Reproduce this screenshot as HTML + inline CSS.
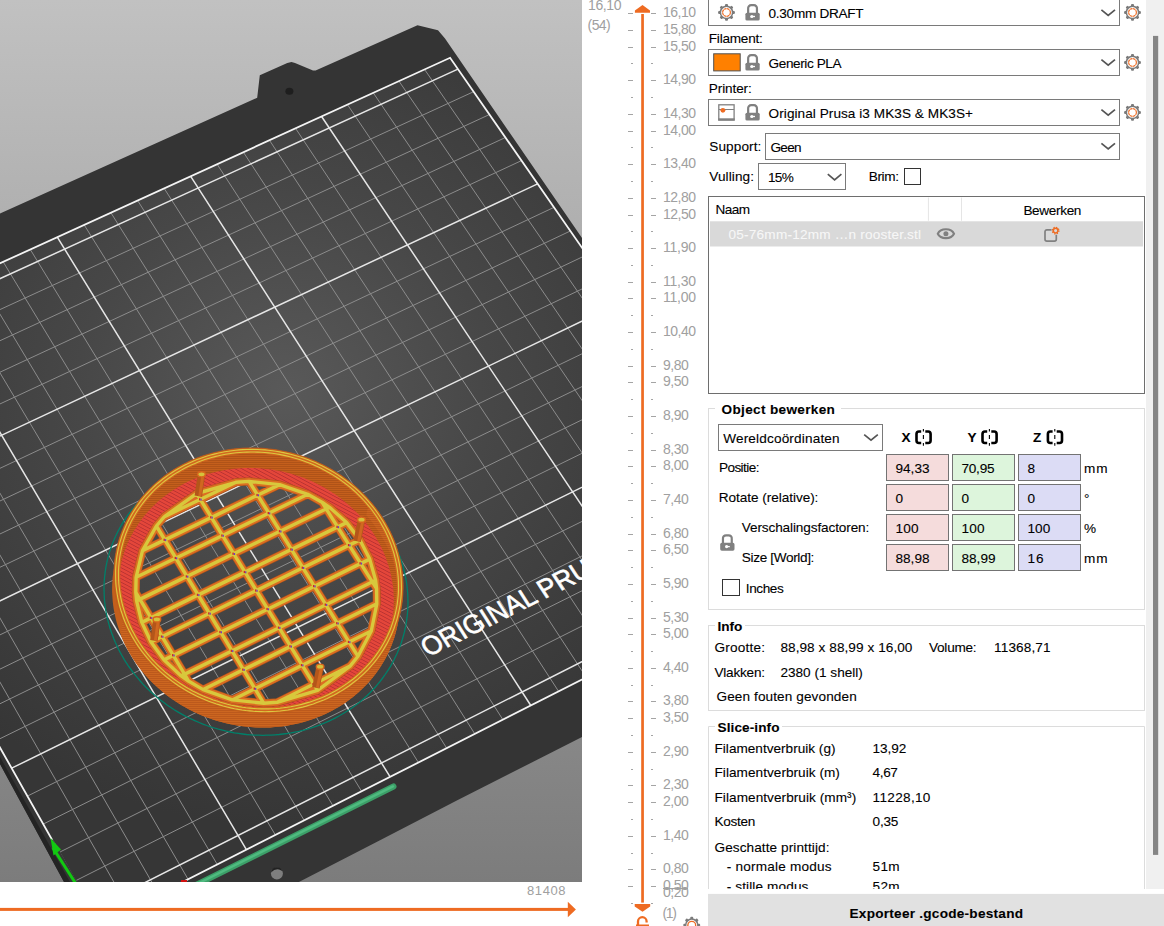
<!DOCTYPE html>
<html><head><meta charset="utf-8"><style>
html,body{margin:0;padding:0;background:#ffffff;width:1164px;height:926px;overflow:hidden}
svg text{font-family:"Liberation Sans",sans-serif}
</style></head><body>
<svg width="1164" height="926" viewBox="0 0 1164 926" style="position:absolute;left:0;top:0">
<svg x="0" y="0" width="582" height="882" viewBox="0 0 582 882">
<defs><linearGradient id="bg" x1="0" y1="0" x2="0" y2="1"><stop offset="0" stop-color="#c1c1c1"/><stop offset="1" stop-color="#7c7c7c"/></linearGradient>
<radialGradient id="surf" gradientUnits="userSpaceOnUse" cx="285" cy="390" r="460" gradientTransform="translate(285 390) scale(1 0.95) translate(-285 -390)"><stop offset="0" stop-color="#595959"/><stop offset="0.45" stop-color="#474747"/><stop offset="1" stop-color="#363636"/></radialGradient>
</defs>
<rect width="582" height="882" fill="url(#bg)"/>
<polygon points="0,213.5 257.2,97.7 259.8,75.3 287.3,62.9 291.5,62 295,62.9 313,70.6 315.6,70.6 417.5,25.3 438,30.2 445,38.5 582,238 582,737 457.3,800.3 380,840.2 298.9,882 64,882 0,764" fill="#343434"/>
<polygon points="0,764 64,882 70,882 0,757" fill="#242424"/>
<ellipse cx="289.4" cy="91.2" rx="4" ry="3.5" fill="#1e1e1e"/>
<ellipse cx="276.9" cy="873.4" rx="6" ry="6" fill="#7e7e7e"/><path d="M271 872.5 A6 6 0 0 1 282.5 871 L279 869.5 Q275 868.5 271 872.5Z" fill="#222"/>
<polygon points="99.7,924.1 803.8,567.1 450.1,57.8 -217.4,362.6" fill="url(#surf)"/>
<path d="M129.3 909.1L-189.4 349.9 M158.7 894.1L-161.6 337.1 M188.1 879.3L-133.9 324.5 M217.3 864.5L-106.2 311.9 M275.4 835L-51.3 286.8 M304.2 820.4L-24 274.3 M333 805.8L3.2 261.9 M361.6 791.3L30.3 249.5 M418.4 762.5L84.2 224.9 M446.7 748.2L110.9 212.7 M474.8 733.9L137.6 200.5 M502.9 719.7L164.2 188.4 M558.6 691.4L217.1 164.2 M586.3 677.4L243.4 152.2 M613.8 663.4L269.5 140.3 M641.3 649.5L295.6 128.4 M695.9 621.8L347.5 104.7 M723 608.1L373.3 92.9 M750 594.4L399 81.2 M777 580.7L424.6 69.5 M75.3 880.9L776.7 528.1 M59.2 852.4L758.8 502.3 M43.2 824.1L741 476.8 M27.4 796.1L723.4 451.4 M-3.9 740.6L688.5 401.1 M-19.4 713.2L671.2 376.3 M-34.8 686L654.1 351.6 M-50 659L637.1 327.2 M-80.2 605.6L603.5 278.7 M-95.1 579.2L586.8 254.8 M-109.9 553L570.3 231 M-124.6 527L553.9 207.4 M-153.6 475.6L521.5 160.6 M-168 450.2L505.4 137.5 M-182.2 424.9L489.5 114.5 M-196.4 399.9L473.6 91.7" stroke="#8c8c8c" stroke-width="1" fill="none" opacity="1"/>
<path d="M246.4 849.7L-78.7 299.3 M390.1 776.9L57.3 237.2 M530.8 705.5L190.7 176.3 M668.7 635.6L321.6 116.5 M91.5 909.6L794.7 554.1 M11.7 768.2L705.9 426.2 M-65.2 632.2L620.2 302.8 M-139.1 501.2L537.6 183.9 M-210.4 375L457.9 69.1" stroke="#e6e6e6" stroke-width="1.5" fill="none" opacity="1"/>
<polygon points="99.7,924.1 803.8,567.1 450.1,57.8 -217.4,362.6" fill="none" stroke="#f4f4f4" stroke-width="1.8"/>
<text transform="matrix(2.7875,-1.3928,1.6981,2.6852,427.89,657.30)" font-family="Liberation Sans" font-size="8.6" fill="#ffffff" stroke="#ffffff" stroke-width="0.2" x="0" y="0" textLength="40" lengthAdjust="spacingAndGlyphs">ORIGINAL</text>
<text transform="matrix(2.7402,-1.3692,1.7276,2.6404,544.54,599.01)" font-family="Liberation Sans" font-size="8.6" fill="#ffffff" stroke="#ffffff" stroke-width="0.2" x="0" y="0" textLength="29.5" lengthAdjust="spacingAndGlyphs">PRUSA</text>
<line x1="196" y1="885" x2="393.5" y2="786.5" stroke="#3c9f68" stroke-width="6" stroke-linecap="round"/><line x1="196" y1="884.6" x2="393" y2="786.4" stroke="#4fbb80" stroke-width="2.4" stroke-linecap="round"/>
<line x1="51.9" y1="840" x2="77.3" y2="884.5" stroke="#383838" stroke-width="2.8"/>
<line x1="53" y1="848" x2="76" y2="884" stroke="#12c812" stroke-width="3"/>
<polygon points="50.5,838 61,849.5 53.5,855.5" fill="#12c812"/>
<rect x="181" y="880" width="6" height="2" fill="#d01010"/>
<g>
<defs><pattern id="redp" patternUnits="userSpaceOnUse" width="3.2" height="3.2" patternTransform="rotate(-62)"><rect width="3.2" height="3.2" fill="#e4463a"/><rect width="0.8" height="3.2" fill="#b83232"/></pattern><pattern id="wallp" patternUnits="userSpaceOnUse" width="2" height="2"><rect width="2" height="2" fill="#cc6620"/><rect width="2" height="0.8" fill="#b8561a"/></pattern><pattern id="innerp" patternUnits="userSpaceOnUse" width="2" height="2"><rect width="2" height="2" fill="#c45f1c"/><rect width="2" height="0.7" fill="#a84e16"/></pattern></defs>
<path d="M386.2 529.1 L384.1 525.9 L381.9 522.8 L379.7 519.7 L377.3 516.7 L374.9 513.7 L372.4 510.8 L369.8 507.9 L367.2 505.1 L364.5 502.4 L361.7 499.7 L358.8 497.1 L355.9 494.6 L352.9 492.1 L349.8 489.7 L346.7 487.4 L343.5 485.2 L340.2 483.0 L336.9 480.9 L333.6 478.9 L330.2 476.9 L326.7 475.0 L323.2 473.3 L319.7 471.6 L316.1 469.9 L312.5 468.4 L308.8 466.9 L305.1 465.6 L301.4 464.3 L297.7 463.1 L293.9 462.0 L290.1 461.0 L286.2 460.1 L282.4 459.2 L278.5 458.5 L274.6 457.8 L270.8 457.3 L266.8 456.8 L262.9 456.4 L259.0 456.1 L255.1 456.0 L251.2 455.9 L247.3 455.9 L243.4 455.9 L239.5 456.1 L235.6 456.4 L231.7 456.8 L227.9 457.2 L224.0 457.8 L220.2 458.4 L216.4 459.1 L212.6 460.0 L208.9 460.9 L205.2 461.9 L201.5 463.0 L197.9 464.1 L194.3 465.4 L190.7 466.8 L187.2 468.2 L183.7 469.7 L180.3 471.3 L176.9 473.0 L173.6 474.8 L170.3 476.7 L167.1 478.6 L163.9 480.6 L160.8 482.7 L157.8 484.9 L154.8 487.1 L151.9 489.4 L149.1 491.8 L146.3 494.3 L143.6 496.8 L141.0 499.4 L138.5 502.1 L136.0 504.8 L133.7 507.6 L131.4 510.4 L129.1 513.3 L127.0 516.3 L125.0 519.3 L123.0 522.4 L121.1 525.5 L119.4 528.7 L117.7 531.9 L116.1 535.2 L114.6 538.5 L113.2 541.8 L111.9 545.2 L110.7 548.6 L109.6 552.1 L108.5 555.6 L107.6 559.1 L106.8 562.6 L106.1 566.2 L105.5 569.8 L105.0 573.4 L104.6 577.0 L104.3 580.6 L104.1 584.3 L104.0 588.0 L104.1 591.6 L104.2 595.3 L104.4 599.0 L104.8 602.7 L105.2 606.3 L105.7 610.0 L106.4 613.6 L107.1 617.3 L108.0 620.9 L109.0 624.6 L110.0 628.2 L111.2 631.7 L112.5 635.3 L113.8 638.8 L115.3 642.3 L116.9 645.8 L118.5 649.2 L120.3 652.6 L122.2 656.0 L124.1 659.3 L126.2 662.6 L128.3 665.8 L130.6 669.0 L132.9 672.1 L135.3 675.2 L137.8 678.2 L140.4 681.2 L143.0 684.1 L145.8 687.0 L148.6 689.7 L151.5 692.5 L154.5 695.1 L157.6 697.7 L160.7 700.2 L163.9 702.6 L167.1 705.0 L170.5 707.3 L173.8 709.5 L177.3 711.6 L180.8 713.6 L184.4 715.6 L188.0 717.5 L191.6 719.2 L195.3 720.9 L199.1 722.5 L202.9 724.1 L206.7 725.5 L210.6 726.8 L214.5 728.0 L218.4 729.2 L222.4 730.2 L226.4 731.2 L230.4 732.0 L234.4 732.8 L238.4 733.4 L242.5 734.0 L246.5 734.5 L250.6 734.8 L254.7 735.1 L258.8 735.2 L262.8 735.3 L266.9 735.2 L271.0 735.1 L275.0 734.8 L279.1 734.5 L283.1 734.0 L287.1 733.5 L291.1 732.9 L295.0 732.1 L298.9 731.3 L302.8 730.3 L306.7 729.3 L310.5 728.2 L314.3 726.9 L318.0 725.6 L321.7 724.2 L325.4 722.7 L328.9 721.1 L332.5 719.4 L336.0 717.6 L339.4 715.8 L342.8 713.8 L346.1 711.8 L349.3 709.7 L352.5 707.5 L355.6 705.2 L358.6 702.9 L361.6 700.4 L364.4 697.9 L367.2 695.4 L370.0 692.7 L372.6 690.0 L375.2 687.2 L377.6 684.4 L380.0 681.5 L382.3 678.5 L384.5 675.5 L386.6 672.4 L388.6 669.3 L390.6 666.1 L392.4 662.9 L394.1 659.6 L395.7 656.3 L397.3 653.0 L398.7 649.6 L400.0 646.2 L401.3 642.7 L402.4 639.2 L403.4 635.7 L404.4 632.1 L405.2 628.5 L405.9 624.9 L406.5 621.3 L407.0 617.7 L407.4 614.1 L407.7 610.4 L407.9 606.7 L408.0 603.1 L407.9 599.4 L407.8 595.7 L407.6 592.0 L407.2 588.4 L406.8 584.7 L406.3 581.1 L405.6 577.4 L404.9 573.8 L404.0 570.2 L403.1 566.6 L402.0 563.0 L400.8 559.5 L399.6 556.0 L398.2 552.5 L396.8 549.0 L395.3 545.6 L393.6 542.2 L391.9 538.9 L390.1 535.6 L388.2 532.3 L386.2 529.1Z" fill="none" stroke="#00806a" stroke-width="1.3"/>
<path d="M379.3 532.4 L377.3 529.4 L375.3 526.5 L373.1 523.5 L370.9 520.7 L368.6 517.9 L366.3 515.1 L363.8 512.4 L361.3 509.7 L358.8 507.2 L356.1 504.6 L353.4 502.2 L350.6 499.8 L347.8 497.4 L344.9 495.1 L341.9 492.9 L338.9 490.8 L335.8 488.7 L332.7 486.7 L329.5 484.8 L326.3 483.0 L323.0 481.2 L319.7 479.5 L316.4 477.9 L313.0 476.4 L309.5 474.9 L306.1 473.5 L302.6 472.2 L299.0 471.0 L295.5 469.9 L291.9 468.8 L288.3 467.9 L284.7 467.0 L281.0 466.2 L277.3 465.5 L273.7 464.9 L270.0 464.4 L266.3 463.9 L262.6 463.6 L258.9 463.3 L255.2 463.1 L251.4 463.0 L247.7 463.0 L244.0 463.1 L240.3 463.3 L236.7 463.5 L233.0 463.9 L229.3 464.3 L225.7 464.8 L222.1 465.4 L218.5 466.1 L214.9 466.9 L211.4 467.8 L207.8 468.7 L204.4 469.7 L200.9 470.9 L197.5 472.1 L194.1 473.3 L190.8 474.7 L187.5 476.2 L184.2 477.7 L181.0 479.3 L177.9 481.0 L174.8 482.7 L171.7 484.6 L168.8 486.5 L165.8 488.5 L162.9 490.5 L160.1 492.7 L157.4 494.9 L154.7 497.1 L152.1 499.5 L149.5 501.8 L147.1 504.3 L144.7 506.8 L142.3 509.4 L140.1 512.1 L137.9 514.8 L135.8 517.5 L133.8 520.3 L131.9 523.2 L130.0 526.1 L128.2 529.1 L126.6 532.1 L125.0 535.1 L123.5 538.2 L122.0 541.3 L120.7 544.5 L119.5 547.7 L118.3 551.0 L117.3 554.2 L116.3 557.5 L115.5 560.9 L114.7 564.2 L114.1 567.6 L113.5 571.0 L113.0 574.4 L112.6 577.8 L112.4 581.3 L112.2 584.7 L112.1 588.2 L112.1 591.7 L112.3 595.2 L112.5 598.6 L112.8 602.1 L113.2 605.6 L113.7 609.1 L114.4 612.5 L115.1 616.0 L115.9 619.4 L116.8 622.9 L117.8 626.3 L118.9 629.6 L120.1 633.0 L121.4 636.3 L122.8 639.7 L124.3 642.9 L125.9 646.2 L127.6 649.4 L129.3 652.6 L131.2 655.7 L133.1 658.8 L135.2 661.9 L137.3 664.9 L139.5 667.9 L141.8 670.8 L144.1 673.6 L146.6 676.4 L149.1 679.2 L151.7 681.9 L154.4 684.5 L157.1 687.1 L160.0 689.6 L162.9 692.0 L165.8 694.4 L168.8 696.7 L171.9 698.9 L175.1 701.1 L178.3 703.2 L181.5 705.2 L184.9 707.1 L188.2 709.0 L191.6 710.7 L195.1 712.4 L198.6 714.0 L202.2 715.5 L205.7 717.0 L209.4 718.3 L213.0 719.6 L216.7 720.7 L220.4 721.8 L224.2 722.8 L228.0 723.7 L231.7 724.5 L235.6 725.2 L239.4 725.8 L243.2 726.3 L247.1 726.8 L250.9 727.1 L254.8 727.3 L258.6 727.5 L262.5 727.5 L266.3 727.5 L270.2 727.4 L274.0 727.1 L277.8 726.8 L281.6 726.4 L285.4 725.9 L289.1 725.3 L292.9 724.6 L296.6 723.8 L300.3 722.9 L303.9 721.9 L307.5 720.8 L311.1 719.7 L314.7 718.4 L318.1 717.1 L321.6 715.7 L325.0 714.2 L328.3 712.6 L331.6 710.9 L334.9 709.1 L338.1 707.3 L341.2 705.4 L344.3 703.4 L347.3 701.3 L350.2 699.1 L353.1 696.9 L355.9 694.6 L358.6 692.3 L361.2 689.8 L363.8 687.3 L366.3 684.8 L368.7 682.2 L371.1 679.5 L373.3 676.7 L375.5 673.9 L377.6 671.1 L379.6 668.2 L381.5 665.2 L383.3 662.2 L385.1 659.2 L386.7 656.1 L388.2 652.9 L389.7 649.7 L391.1 646.5 L392.3 643.3 L393.5 640.0 L394.6 636.7 L395.5 633.4 L396.4 630.0 L397.2 626.6 L397.9 623.2 L398.5 619.8 L398.9 616.4 L399.3 612.9 L399.6 609.5 L399.8 606.0 L399.9 602.5 L399.8 599.0 L399.7 595.6 L399.5 592.1 L399.2 588.6 L398.8 585.1 L398.3 581.7 L397.7 578.2 L397.0 574.8 L396.2 571.4 L395.3 568.0 L394.3 564.6 L393.2 561.3 L392.0 557.9 L390.7 554.6 L389.4 551.3 L387.9 548.1 L386.4 544.9 L384.7 541.7 L383.0 538.6 L381.2 535.5 L379.3 532.4Z" fill="#c45f1c"/>
<path d="M382.4 517.6 L380.4 514.6 L378.4 511.6 L376.2 508.7 L374.0 505.8 L371.7 503.0 L369.3 500.2 L366.9 497.5 L364.3 494.8 L361.7 492.2 L359.1 489.7 L356.4 487.2 L353.6 484.8 L350.7 482.5 L347.8 480.2 L344.8 478.0 L341.8 475.8 L338.7 473.8 L335.6 471.8 L332.4 469.8 L329.1 468.0 L325.8 466.2 L322.5 464.5 L319.1 462.9 L315.7 461.3 L312.3 459.9 L308.8 458.5 L305.3 457.2 L301.7 456.0 L298.1 454.9 L294.5 453.8 L290.9 452.8 L287.3 452.0 L283.6 451.2 L279.9 450.5 L276.2 449.8 L272.5 449.3 L268.8 448.9 L265.1 448.5 L261.4 448.2 L257.6 448.1 L253.9 448.0 L250.2 448.0 L246.4 448.0 L242.7 448.2 L239.0 448.5 L235.3 448.8 L231.7 449.2 L228.0 449.8 L224.4 450.4 L220.8 451.1 L217.2 451.9 L213.6 452.7 L210.1 453.7 L206.6 454.7 L203.1 455.8 L199.7 457.0 L196.3 458.3 L192.9 459.7 L189.6 461.1 L186.4 462.7 L183.2 464.3 L180.0 466.0 L176.9 467.7 L173.8 469.6 L170.8 471.5 L167.9 473.5 L165.0 475.6 L162.2 477.7 L159.4 479.9 L156.7 482.2 L154.1 484.5 L151.5 486.9 L149.0 489.4 L146.6 491.9 L144.3 494.5 L142.0 497.1 L139.8 499.8 L137.7 502.6 L135.7 505.4 L133.8 508.3 L131.9 511.2 L130.1 514.2 L128.4 517.2 L126.8 520.3 L125.3 523.4 L123.9 526.5 L122.6 529.7 L121.3 532.9 L120.2 536.1 L119.1 539.4 L118.2 542.7 L117.3 546.1 L116.5 549.4 L115.9 552.8 L115.3 556.2 L114.8 559.7 L114.5 563.1 L114.2 566.6 L114.0 570.0 L113.9 573.5 L114.0 577.0 L114.1 580.5 L114.3 584.0 L114.6 587.4 L115.1 590.9 L115.6 594.4 L116.2 597.9 L116.9 601.3 L117.7 604.8 L118.7 608.2 L119.7 611.6 L120.8 615.0 L122.0 618.4 L123.3 621.8 L124.7 625.1 L126.2 628.4 L127.8 631.6 L129.5 634.9 L131.3 638.1 L133.1 641.2 L135.1 644.3 L137.1 647.4 L139.3 650.4 L141.5 653.4 L143.8 656.3 L146.1 659.2 L148.6 662.0 L151.1 664.7 L153.8 667.4 L156.5 670.1 L159.2 672.7 L162.1 675.2 L165.0 677.6 L167.9 680.0 L171.0 682.3 L174.1 684.5 L177.2 686.7 L180.5 688.8 L183.7 690.8 L187.1 692.7 L190.5 694.6 L193.9 696.4 L197.4 698.0 L200.9 699.6 L204.5 701.2 L208.1 702.6 L211.7 704.0 L215.4 705.2 L219.1 706.4 L222.8 707.5 L226.6 708.5 L230.4 709.4 L234.2 710.2 L238.0 710.9 L241.9 711.5 L245.7 712.0 L249.6 712.5 L253.4 712.8 L257.3 713.0 L261.2 713.2 L265.1 713.2 L268.9 713.2 L272.8 713.1 L276.6 712.8 L280.5 712.5 L284.3 712.1 L288.1 711.6 L291.9 710.9 L295.6 710.2 L299.4 709.4 L303.1 708.5 L306.7 707.6 L310.4 706.5 L314.0 705.3 L317.5 704.1 L321.0 702.7 L324.5 701.3 L327.9 699.8 L331.3 698.2 L334.6 696.5 L337.8 694.8 L341.0 692.9 L344.2 691.0 L347.3 689.0 L350.3 686.9 L353.2 684.8 L356.1 682.5 L358.9 680.2 L361.7 677.9 L364.3 675.4 L366.9 672.9 L369.4 670.3 L371.8 667.7 L374.2 665.0 L376.5 662.3 L378.6 659.5 L380.7 656.6 L382.7 653.7 L384.7 650.7 L386.5 647.7 L388.2 644.6 L389.9 641.5 L391.4 638.4 L392.9 635.2 L394.3 632.0 L395.5 628.7 L396.7 625.4 L397.8 622.1 L398.8 618.8 L399.6 615.4 L400.4 612.0 L401.1 608.6 L401.7 605.2 L402.2 601.7 L402.5 598.3 L402.8 594.8 L403.0 591.3 L403.1 587.8 L403.1 584.4 L403.0 580.9 L402.7 577.4 L402.4 573.9 L402.0 570.4 L401.5 567.0 L400.9 563.5 L400.2 560.1 L399.4 556.6 L398.4 553.2 L397.4 549.8 L396.4 546.5 L395.2 543.1 L393.9 539.8 L392.5 536.5 L391.0 533.3 L389.5 530.1 L387.8 526.9 L386.1 523.7 L384.3 520.6 L382.4 517.6Z" fill="#c45f1c"/>
<path d="M377.2 520.1 L375.3 517.2 L373.3 514.4 L371.2 511.6 L369.1 508.8 L366.9 506.1 L364.6 503.5 L362.3 500.9 L359.9 498.3 L357.4 495.9 L354.8 493.4 L352.2 491.0 L349.6 488.7 L346.8 486.5 L344.0 484.3 L341.2 482.2 L338.3 480.1 L335.3 478.1 L332.3 476.2 L329.2 474.4 L326.1 472.6 L323.0 470.9 L319.8 469.3 L316.6 467.7 L313.3 466.2 L310.0 464.8 L306.7 463.5 L303.3 462.3 L299.9 461.1 L296.5 460.0 L293.0 459.0 L289.6 458.1 L286.1 457.3 L282.5 456.5 L279.0 455.8 L275.5 455.2 L271.9 454.7 L268.4 454.3 L264.8 453.9 L261.2 453.7 L257.7 453.5 L254.1 453.4 L250.5 453.4 L247.0 453.5 L243.4 453.7 L239.8 453.9 L236.3 454.2 L232.8 454.6 L229.3 455.1 L225.8 455.7 L222.3 456.4 L218.9 457.1 L215.5 458.0 L212.1 458.9 L208.8 459.9 L205.4 461.0 L202.2 462.1 L198.9 463.4 L195.7 464.7 L192.5 466.1 L189.4 467.5 L186.3 469.1 L183.3 470.7 L180.3 472.4 L177.4 474.1 L174.5 476.0 L171.7 477.9 L168.9 479.9 L166.2 481.9 L163.6 484.0 L161.0 486.2 L158.5 488.4 L156.0 490.7 L153.6 493.1 L151.3 495.5 L149.1 498.0 L146.9 500.6 L144.8 503.2 L142.8 505.8 L140.9 508.5 L139.0 511.2 L137.2 514.0 L135.5 516.9 L133.9 519.8 L132.4 522.7 L131.0 525.7 L129.6 528.7 L128.3 531.7 L127.1 534.8 L126.1 537.9 L125.0 541.1 L124.1 544.2 L123.3 547.4 L122.6 550.7 L121.9 553.9 L121.4 557.2 L121.0 560.4 L120.6 563.7 L120.3 567.0 L120.2 570.4 L120.1 573.7 L120.1 577.0 L120.2 580.4 L120.5 583.7 L120.8 587.0 L121.2 590.4 L121.7 593.7 L122.3 597.0 L123.0 600.4 L123.8 603.7 L124.7 606.9 L125.6 610.2 L126.7 613.5 L127.9 616.7 L129.1 619.9 L130.5 623.1 L131.9 626.2 L133.4 629.3 L135.0 632.4 L136.7 635.5 L138.5 638.5 L140.4 641.5 L142.4 644.4 L144.4 647.3 L146.5 650.1 L148.7 652.9 L151.0 655.7 L153.4 658.4 L155.8 661.0 L158.3 663.6 L160.9 666.1 L163.5 668.6 L166.2 671.0 L169.0 673.3 L171.8 675.6 L174.8 677.8 L177.7 679.9 L180.8 682.0 L183.8 684.0 L187.0 685.9 L190.2 687.8 L193.4 689.5 L196.7 691.2 L200.0 692.8 L203.4 694.4 L206.8 695.8 L210.3 697.2 L213.7 698.5 L217.3 699.7 L220.8 700.8 L224.4 701.8 L228.0 702.8 L231.6 703.6 L235.2 704.4 L238.9 705.1 L242.6 705.7 L246.3 706.2 L250.0 706.6 L253.7 706.9 L257.4 707.2 L261.1 707.3 L264.8 707.4 L268.5 707.3 L272.2 707.2 L275.9 707.0 L279.5 706.6 L283.2 706.2 L286.8 705.7 L290.4 705.2 L294.0 704.5 L297.6 703.7 L301.1 702.9 L304.6 701.9 L308.1 700.9 L311.5 699.8 L314.9 698.6 L318.3 697.3 L321.6 696.0 L324.9 694.5 L328.1 693.0 L331.3 691.4 L334.4 689.7 L337.5 687.9 L340.5 686.1 L343.4 684.2 L346.3 682.2 L349.1 680.1 L351.9 678.0 L354.6 675.8 L357.2 673.5 L359.7 671.2 L362.2 668.8 L364.6 666.4 L366.9 663.8 L369.2 661.3 L371.4 658.6 L373.5 655.9 L375.5 653.2 L377.4 650.4 L379.2 647.6 L381.0 644.7 L382.6 641.8 L384.2 638.8 L385.7 635.8 L387.1 632.8 L388.4 629.7 L389.6 626.6 L390.8 623.4 L391.8 620.2 L392.7 617.0 L393.6 613.8 L394.3 610.6 L395.0 607.3 L395.5 604.0 L396.0 600.7 L396.4 597.4 L396.7 594.1 L396.8 590.8 L396.9 587.4 L396.9 584.1 L396.8 580.8 L396.6 577.4 L396.3 574.1 L395.9 570.8 L395.4 567.4 L394.8 564.1 L394.1 560.8 L393.4 557.6 L392.5 554.3 L391.5 551.0 L390.5 547.8 L389.4 544.6 L388.1 541.4 L386.8 538.3 L385.4 535.2 L383.9 532.1 L382.4 529.1 L380.7 526.0 L379.0 523.1 L377.2 520.1Z" fill="url(#innerp)"/>
<clipPath id="ctop"><path d="M377.2 520.1 L375.3 517.2 L373.3 514.4 L371.2 511.6 L369.1 508.8 L366.9 506.1 L364.6 503.5 L362.3 500.9 L359.9 498.3 L357.4 495.9 L354.8 493.4 L352.2 491.0 L349.6 488.7 L346.8 486.5 L344.0 484.3 L341.2 482.2 L338.3 480.1 L335.3 478.1 L332.3 476.2 L329.2 474.4 L326.1 472.6 L323.0 470.9 L319.8 469.3 L316.6 467.7 L313.3 466.2 L310.0 464.8 L306.7 463.5 L303.3 462.3 L299.9 461.1 L296.5 460.0 L293.0 459.0 L289.6 458.1 L286.1 457.3 L282.5 456.5 L279.0 455.8 L275.5 455.2 L271.9 454.7 L268.4 454.3 L264.8 453.9 L261.2 453.7 L257.7 453.5 L254.1 453.4 L250.5 453.4 L247.0 453.5 L243.4 453.7 L239.8 453.9 L236.3 454.2 L232.8 454.6 L229.3 455.1 L225.8 455.7 L222.3 456.4 L218.9 457.1 L215.5 458.0 L212.1 458.9 L208.8 459.9 L205.4 461.0 L202.2 462.1 L198.9 463.4 L195.7 464.7 L192.5 466.1 L189.4 467.5 L186.3 469.1 L183.3 470.7 L180.3 472.4 L177.4 474.1 L174.5 476.0 L171.7 477.9 L168.9 479.9 L166.2 481.9 L163.6 484.0 L161.0 486.2 L158.5 488.4 L156.0 490.7 L153.6 493.1 L151.3 495.5 L149.1 498.0 L146.9 500.6 L144.8 503.2 L142.8 505.8 L140.9 508.5 L139.0 511.2 L137.2 514.0 L135.5 516.9 L133.9 519.8 L132.4 522.7 L131.0 525.7 L129.6 528.7 L128.3 531.7 L127.1 534.8 L126.1 537.9 L125.0 541.1 L124.1 544.2 L123.3 547.4 L122.6 550.7 L121.9 553.9 L121.4 557.2 L121.0 560.4 L120.6 563.7 L120.3 567.0 L120.2 570.4 L120.1 573.7 L120.1 577.0 L120.2 580.4 L120.5 583.7 L120.8 587.0 L121.2 590.4 L121.7 593.7 L122.3 597.0 L123.0 600.4 L123.8 603.7 L124.7 606.9 L125.6 610.2 L126.7 613.5 L127.9 616.7 L129.1 619.9 L130.5 623.1 L131.9 626.2 L133.4 629.3 L135.0 632.4 L136.7 635.5 L138.5 638.5 L140.4 641.5 L142.4 644.4 L144.4 647.3 L146.5 650.1 L148.7 652.9 L151.0 655.7 L153.4 658.4 L155.8 661.0 L158.3 663.6 L160.9 666.1 L163.5 668.6 L166.2 671.0 L169.0 673.3 L171.8 675.6 L174.8 677.8 L177.7 679.9 L180.8 682.0 L183.8 684.0 L187.0 685.9 L190.2 687.8 L193.4 689.5 L196.7 691.2 L200.0 692.8 L203.4 694.4 L206.8 695.8 L210.3 697.2 L213.7 698.5 L217.3 699.7 L220.8 700.8 L224.4 701.8 L228.0 702.8 L231.6 703.6 L235.2 704.4 L238.9 705.1 L242.6 705.7 L246.3 706.2 L250.0 706.6 L253.7 706.9 L257.4 707.2 L261.1 707.3 L264.8 707.4 L268.5 707.3 L272.2 707.2 L275.9 707.0 L279.5 706.6 L283.2 706.2 L286.8 705.7 L290.4 705.2 L294.0 704.5 L297.6 703.7 L301.1 702.9 L304.6 701.9 L308.1 700.9 L311.5 699.8 L314.9 698.6 L318.3 697.3 L321.6 696.0 L324.9 694.5 L328.1 693.0 L331.3 691.4 L334.4 689.7 L337.5 687.9 L340.5 686.1 L343.4 684.2 L346.3 682.2 L349.1 680.1 L351.9 678.0 L354.6 675.8 L357.2 673.5 L359.7 671.2 L362.2 668.8 L364.6 666.4 L366.9 663.8 L369.2 661.3 L371.4 658.6 L373.5 655.9 L375.5 653.2 L377.4 650.4 L379.2 647.6 L381.0 644.7 L382.6 641.8 L384.2 638.8 L385.7 635.8 L387.1 632.8 L388.4 629.7 L389.6 626.6 L390.8 623.4 L391.8 620.2 L392.7 617.0 L393.6 613.8 L394.3 610.6 L395.0 607.3 L395.5 604.0 L396.0 600.7 L396.4 597.4 L396.7 594.1 L396.8 590.8 L396.9 587.4 L396.9 584.1 L396.8 580.8 L396.6 577.4 L396.3 574.1 L395.9 570.8 L395.4 567.4 L394.8 564.1 L394.1 560.8 L393.4 557.6 L392.5 554.3 L391.5 551.0 L390.5 547.8 L389.4 544.6 L388.1 541.4 L386.8 538.3 L385.4 535.2 L383.9 532.1 L382.4 529.1 L380.7 526.0 L379.0 523.1 L377.2 520.1Z"/></clipPath>
<g clip-path="url(#ctop)">
<path d="M374.2 534.5 L372.3 531.7 L370.3 528.8 L368.3 526.0 L366.2 523.3 L364.0 520.6 L361.7 517.9 L359.4 515.3 L357.0 512.8 L354.5 510.3 L352.0 507.9 L349.4 505.5 L346.7 503.2 L344.0 501.0 L341.2 498.8 L338.4 496.7 L335.5 494.6 L332.5 492.7 L329.6 490.8 L326.5 488.9 L323.4 487.1 L320.3 485.4 L317.1 483.8 L313.9 482.3 L310.7 480.8 L307.4 479.4 L304.0 478.1 L300.7 476.8 L297.3 475.7 L293.9 474.6 L290.5 473.6 L287.0 472.7 L283.5 471.8 L280.0 471.1 L276.5 470.4 L273.0 469.8 L269.5 469.3 L265.9 468.9 L262.4 468.5 L258.8 468.3 L255.3 468.1 L251.7 468.0 L248.1 468.0 L244.6 468.1 L241.1 468.2 L237.5 468.5 L234.0 468.8 L230.5 469.2 L227.0 469.7 L223.6 470.3 L220.1 471.0 L216.7 471.7 L213.3 472.6 L209.9 473.5 L206.6 474.5 L203.3 475.5 L200.0 476.7 L196.8 477.9 L193.6 479.2 L190.4 480.6 L187.3 482.1 L184.2 483.6 L181.2 485.2 L178.3 486.9 L175.3 488.7 L172.5 490.5 L169.7 492.4 L166.9 494.4 L164.2 496.4 L161.6 498.5 L159.0 500.7 L156.5 502.9 L154.1 505.2 L151.7 507.6 L149.4 510.0 L147.2 512.5 L145.0 515.0 L142.9 517.6 L140.9 520.3 L139.0 522.9 L137.2 525.7 L135.4 528.5 L133.7 531.3 L132.1 534.2 L130.6 537.1 L129.1 540.1 L127.8 543.1 L126.5 546.1 L125.3 549.2 L124.2 552.3 L123.2 555.4 L122.3 558.6 L121.5 561.8 L120.8 565.0 L120.1 568.2 L119.6 571.5 L119.2 574.8 L118.8 578.0 L118.5 581.3 L118.4 584.7 L118.3 588.0 L118.3 591.3 L118.5 594.6 L118.7 598.0 L119.0 601.3 L119.4 604.6 L119.9 607.9 L120.5 611.3 L121.2 614.6 L122.0 617.8 L122.8 621.1 L123.8 624.4 L124.9 627.6 L126.0 630.8 L127.3 634.0 L128.6 637.2 L130.0 640.4 L131.6 643.5 L133.2 646.5 L134.9 649.6 L136.6 652.6 L138.5 655.6 L140.4 658.5 L142.5 661.4 L144.6 664.2 L146.8 667.0 L149.0 669.7 L151.4 672.4 L153.8 675.0 L156.3 677.6 L158.9 680.1 L161.5 682.6 L164.2 685.0 L167.0 687.3 L169.8 689.6 L172.7 691.8 L175.6 693.9 L178.6 696.0 L181.7 698.0 L184.8 699.9 L188.0 701.7 L191.2 703.5 L194.5 705.2 L197.8 706.8 L201.2 708.3 L204.6 709.8 L208.0 711.1 L211.5 712.4 L215.0 713.6 L218.5 714.7 L222.1 715.8 L225.6 716.7 L229.2 717.6 L232.9 718.3 L236.5 719.0 L240.2 719.6 L243.8 720.1 L247.5 720.5 L251.2 720.8 L254.9 721.1 L258.6 721.2 L262.3 721.3 L265.9 721.2 L269.6 721.1 L273.3 720.9 L276.9 720.5 L280.6 720.1 L284.2 719.7 L287.8 719.1 L291.4 718.4 L294.9 717.6 L298.4 716.8 L301.9 715.9 L305.4 714.8 L308.8 713.7 L312.2 712.5 L315.5 711.3 L318.8 709.9 L322.1 708.5 L325.3 706.9 L328.4 705.3 L331.5 703.6 L334.6 701.9 L337.6 700.1 L340.5 698.1 L343.4 696.2 L346.2 694.1 L348.9 692.0 L351.6 689.8 L354.2 687.5 L356.8 685.2 L359.2 682.8 L361.6 680.4 L364.0 677.9 L366.2 675.3 L368.4 672.7 L370.4 670.0 L372.4 667.3 L374.3 664.5 L376.2 661.7 L377.9 658.8 L379.6 655.9 L381.2 652.9 L382.6 649.9 L384.0 646.9 L385.3 643.8 L386.6 640.7 L387.7 637.5 L388.7 634.4 L389.6 631.2 L390.5 628.0 L391.2 624.7 L391.9 621.5 L392.4 618.2 L392.9 614.9 L393.3 611.6 L393.5 608.3 L393.7 605.0 L393.8 601.7 L393.8 598.3 L393.7 595.0 L393.5 591.7 L393.2 588.3 L392.8 585.0 L392.3 581.7 L391.7 578.4 L391.0 575.1 L390.3 571.9 L389.4 568.6 L388.5 565.4 L387.4 562.2 L386.3 559.0 L385.1 555.8 L383.8 552.7 L382.4 549.6 L380.9 546.5 L379.4 543.4 L377.7 540.4 L376.0 537.5 L374.2 534.5Z M164.1 659.9 L181.2 675.9 L188.8 681.3 L203.2 689.6 L232.3 699.9 L263.7 703.2 L277.2 702.3 L317.6 690.4 L350.1 666.1 L358.0 656.3 L371.3 631.0 L376.8 603.8 L376.6 588.7 L375.6 580.2 L369.7 559.1 L359.9 539.9 L346.6 522.6 L329.5 507.3 L322.0 502.2 L307.8 494.3 L279.6 484.6 L249.1 481.4 L236.0 482.3 L196.7 493.5 L164.4 516.6 L156.4 526.0 L142.5 550.6 L136.1 577.3 L135.8 592.4 L136.6 600.9 L141.8 622.4 L151.0 642.0Z" fill="url(#redp)" fill-rule="evenodd"/>
<clipPath id="cin"><path d="M164.1 659.9 L181.2 675.9 L188.8 681.3 L203.2 689.6 L232.3 699.9 L263.7 703.2 L277.2 702.3 L317.6 690.4 L350.1 666.1 L358.0 656.3 L371.3 631.0 L376.8 603.8 L376.6 588.7 L375.6 580.2 L369.7 559.1 L359.9 539.9 L346.6 522.6 L329.5 507.3 L322.0 502.2 L307.8 494.3 L279.6 484.6 L249.1 481.4 L236.0 482.3 L196.7 493.5 L164.4 516.6 L156.4 526.0 L142.5 550.6 L136.1 577.3 L135.8 592.4 L136.6 600.9 L141.8 622.4 L151.0 642.0Z"/></clipPath>
<g clip-path="url(#cin)">
<polygon points="99.7,924.1 803.8,567.1 450.1,57.8 -217.4,362.6" fill="url(#surf)"/>
<path d="M129.3 909.1L-189.4 349.9 M158.7 894.1L-161.6 337.1 M188.1 879.3L-133.9 324.5 M217.3 864.5L-106.2 311.9 M275.4 835L-51.3 286.8 M304.2 820.4L-24 274.3 M333 805.8L3.2 261.9 M361.6 791.3L30.3 249.5 M418.4 762.5L84.2 224.9 M446.7 748.2L110.9 212.7 M474.8 733.9L137.6 200.5 M502.9 719.7L164.2 188.4 M558.6 691.4L217.1 164.2 M586.3 677.4L243.4 152.2 M613.8 663.4L269.5 140.3 M641.3 649.5L295.6 128.4 M695.9 621.8L347.5 104.7 M723 608.1L373.3 92.9 M750 594.4L399 81.2 M777 580.7L424.6 69.5 M75.3 880.9L776.7 528.1 M59.2 852.4L758.8 502.3 M43.2 824.1L741 476.8 M27.4 796.1L723.4 451.4 M-3.9 740.6L688.5 401.1 M-19.4 713.2L671.2 376.3 M-34.8 686L654.1 351.6 M-50 659L637.1 327.2 M-80.2 605.6L603.5 278.7 M-95.1 579.2L586.8 254.8 M-109.9 553L570.3 231 M-124.6 527L553.9 207.4 M-153.6 475.6L521.5 160.6 M-168 450.2L505.4 137.5 M-182.2 424.9L489.5 114.5 M-196.4 399.9L473.6 91.7" stroke="#8c8c8c" stroke-width="1" fill="none" opacity="1"/>
<path d="M246.4 849.7L-78.7 299.3 M390.1 776.9L57.3 237.2 M530.8 705.5L190.7 176.3 M668.7 635.6L321.6 116.5 M91.5 909.6L794.7 554.1 M11.7 768.2L705.9 426.2 M-65.2 632.2L620.2 302.8 M-139.1 501.2L537.6 183.9 M-210.4 375L457.9 69.1" stroke="#e6e6e6" stroke-width="1.5" fill="none" opacity="1"/>
</g>
<path d="M277.2 702.3L350.1 666.1 M232.3 699.9L371.3 631.0 M203.2 689.6L376.8 603.8 M181.2 675.9L375.6 580.2 M164.1 659.9L369.7 559.1 M151.0 642.0L359.9 539.9 M141.8 622.4L346.6 522.6 M136.6 600.9L329.5 507.3 M136.1 577.3L307.8 494.3 M142.5 550.6L279.6 484.6 M164.4 516.6L236.0 482.3 M188.8 681.3L135.8 592.4 M263.7 703.2L156.4 526.0 M317.6 690.4L196.7 493.5 M358.0 656.3L249.1 481.4 M376.6 588.7L322.0 502.2 M164.1 659.9 L181.2 675.9 L188.8 681.3 L203.2 689.6 L232.3 699.9 L263.7 703.2 L277.2 702.3 L317.6 690.4 L350.1 666.1 L358.0 656.3 L371.3 631.0 L376.8 603.8 L376.6 588.7 L375.6 580.2 L369.7 559.1 L359.9 539.9 L346.6 522.6 L329.5 507.3 L322.0 502.2 L307.8 494.3 L279.6 484.6 L249.1 481.4 L236.0 482.3 L196.7 493.5 L164.4 516.6 L156.4 526.0 L142.5 550.6 L136.1 577.3 L135.8 592.4 L136.6 600.9 L141.8 622.4 L151.0 642.0Z" stroke="#b0541a" stroke-width="8" fill="none" stroke-linejoin="round"/>
<path d="M277.2 702.3L350.1 666.1 M232.3 699.9L371.3 631.0 M203.2 689.6L376.8 603.8 M181.2 675.9L375.6 580.2 M164.1 659.9L369.7 559.1 M151.0 642.0L359.9 539.9 M141.8 622.4L346.6 522.6 M136.6 600.9L329.5 507.3 M136.1 577.3L307.8 494.3 M142.5 550.6L279.6 484.6 M164.4 516.6L236.0 482.3 M188.8 681.3L135.8 592.4 M263.7 703.2L156.4 526.0 M317.6 690.4L196.7 493.5 M358.0 656.3L249.1 481.4 M376.6 588.7L322.0 502.2 M164.1 659.9 L181.2 675.9 L188.8 681.3 L203.2 689.6 L232.3 699.9 L263.7 703.2 L277.2 702.3 L317.6 690.4 L350.1 666.1 L358.0 656.3 L371.3 631.0 L376.8 603.8 L376.6 588.7 L375.6 580.2 L369.7 559.1 L359.9 539.9 L346.6 522.6 L329.5 507.3 L322.0 502.2 L307.8 494.3 L279.6 484.6 L249.1 481.4 L236.0 482.3 L196.7 493.5 L164.4 516.6 L156.4 526.0 L142.5 550.6 L136.1 577.3 L135.8 592.4 L136.6 600.9 L141.8 622.4 L151.0 642.0Z" stroke="#dc6e22" stroke-width="6.8" fill="none" stroke-linejoin="round"/>
<path d="M277.2 702.3L350.1 666.1 M232.3 699.9L371.3 631.0 M203.2 689.6L376.8 603.8 M181.2 675.9L375.6 580.2 M164.1 659.9L369.7 559.1 M151.0 642.0L359.9 539.9 M141.8 622.4L346.6 522.6 M136.6 600.9L329.5 507.3 M136.1 577.3L307.8 494.3 M142.5 550.6L279.6 484.6 M164.4 516.6L236.0 482.3 M188.8 681.3L135.8 592.4 M263.7 703.2L156.4 526.0 M317.6 690.4L196.7 493.5 M358.0 656.3L249.1 481.4 M376.6 588.7L322.0 502.2 M164.1 659.9 L181.2 675.9 L188.8 681.3 L203.2 689.6 L232.3 699.9 L263.7 703.2 L277.2 702.3 L317.6 690.4 L350.1 666.1 L358.0 656.3 L371.3 631.0 L376.8 603.8 L376.6 588.7 L375.6 580.2 L369.7 559.1 L359.9 539.9 L346.6 522.6 L329.5 507.3 L322.0 502.2 L307.8 494.3 L279.6 484.6 L249.1 481.4 L236.0 482.3 L196.7 493.5 L164.4 516.6 L156.4 526.0 L142.5 550.6 L136.1 577.3 L135.8 592.4 L136.6 600.9 L141.8 622.4 L151.0 642.0Z" stroke="#d8c83c" stroke-width="3.4" fill="none" stroke-linejoin="round"/>
<rect x="312.4" y="683.0" width="1.4" height="2.2" fill="#d02828"/><rect x="313.8" y="683.4" width="1.3" height="2" fill="#7040c0"/>
<rect x="253.6" y="687.5" width="1.4" height="2.2" fill="#d02828"/><rect x="255.0" y="687.9" width="1.3" height="2" fill="#7040c0"/>
<rect x="300.8" y="664.0" width="1.4" height="2.2" fill="#d02828"/><rect x="302.2" y="664.4" width="1.3" height="2" fill="#7040c0"/>
<rect x="347.8" y="640.8" width="1.4" height="2.2" fill="#d02828"/><rect x="349.2" y="641.2" width="1.3" height="2" fill="#7040c0"/>
<rect x="242.1" y="668.5" width="1.4" height="2.2" fill="#d02828"/><rect x="243.5" y="668.9" width="1.3" height="2" fill="#7040c0"/>
<rect x="289.3" y="645.2" width="1.4" height="2.2" fill="#d02828"/><rect x="290.7" y="645.6" width="1.3" height="2" fill="#7040c0"/>
<rect x="336.1" y="622.1" width="1.4" height="2.2" fill="#d02828"/><rect x="337.5" y="622.5" width="1.3" height="2" fill="#7040c0"/>
<rect x="230.7" y="649.7" width="1.4" height="2.2" fill="#d02828"/><rect x="232.1" y="650.1" width="1.3" height="2" fill="#7040c0"/>
<rect x="277.8" y="626.5" width="1.4" height="2.2" fill="#d02828"/><rect x="279.2" y="626.9" width="1.3" height="2" fill="#7040c0"/>
<rect x="324.6" y="603.5" width="1.4" height="2.2" fill="#d02828"/><rect x="326.0" y="603.9" width="1.3" height="2" fill="#7040c0"/>
<rect x="172.0" y="654.1" width="1.4" height="2.2" fill="#d02828"/><rect x="173.4" y="654.5" width="1.3" height="2" fill="#7040c0"/>
<rect x="219.3" y="630.9" width="1.4" height="2.2" fill="#d02828"/><rect x="220.7" y="631.3" width="1.3" height="2" fill="#7040c0"/>
<rect x="266.4" y="607.9" width="1.4" height="2.2" fill="#d02828"/><rect x="267.8" y="608.3" width="1.3" height="2" fill="#7040c0"/>
<rect x="313.0" y="585.0" width="1.4" height="2.2" fill="#d02828"/><rect x="314.4" y="585.4" width="1.3" height="2" fill="#7040c0"/>
<rect x="359.4" y="562.2" width="1.4" height="2.2" fill="#d02828"/><rect x="360.8" y="562.6" width="1.3" height="2" fill="#7040c0"/>
<rect x="160.8" y="635.4" width="1.4" height="2.2" fill="#d02828"/><rect x="162.2" y="635.8" width="1.3" height="2" fill="#7040c0"/>
<rect x="208.1" y="612.3" width="1.4" height="2.2" fill="#d02828"/><rect x="209.5" y="612.7" width="1.3" height="2" fill="#7040c0"/>
<rect x="255.0" y="589.4" width="1.4" height="2.2" fill="#d02828"/><rect x="256.4" y="589.8" width="1.3" height="2" fill="#7040c0"/>
<rect x="301.6" y="566.6" width="1.4" height="2.2" fill="#d02828"/><rect x="303.0" y="567.0" width="1.3" height="2" fill="#7040c0"/>
<rect x="347.9" y="544.0" width="1.4" height="2.2" fill="#d02828"/><rect x="349.3" y="544.4" width="1.3" height="2" fill="#7040c0"/>
<rect x="149.7" y="616.7" width="1.4" height="2.2" fill="#d02828"/><rect x="151.1" y="617.1" width="1.3" height="2" fill="#7040c0"/>
<rect x="196.8" y="593.7" width="1.4" height="2.2" fill="#d02828"/><rect x="198.2" y="594.1" width="1.3" height="2" fill="#7040c0"/>
<rect x="243.7" y="570.9" width="1.4" height="2.2" fill="#d02828"/><rect x="245.1" y="571.3" width="1.3" height="2" fill="#7040c0"/>
<rect x="290.2" y="548.3" width="1.4" height="2.2" fill="#d02828"/><rect x="291.6" y="548.7" width="1.3" height="2" fill="#7040c0"/>
<rect x="336.4" y="525.8" width="1.4" height="2.2" fill="#d02828"/><rect x="337.8" y="526.2" width="1.3" height="2" fill="#7040c0"/>
<rect x="185.7" y="575.3" width="1.4" height="2.2" fill="#d02828"/><rect x="187.1" y="575.7" width="1.3" height="2" fill="#7040c0"/>
<rect x="232.4" y="552.6" width="1.4" height="2.2" fill="#d02828"/><rect x="233.8" y="553.0" width="1.3" height="2" fill="#7040c0"/>
<rect x="278.8" y="530.1" width="1.4" height="2.2" fill="#d02828"/><rect x="280.2" y="530.5" width="1.3" height="2" fill="#7040c0"/>
<rect x="174.6" y="556.9" width="1.4" height="2.2" fill="#d02828"/><rect x="176.0" y="557.3" width="1.3" height="2" fill="#7040c0"/>
<rect x="221.2" y="534.4" width="1.4" height="2.2" fill="#d02828"/><rect x="222.6" y="534.8" width="1.3" height="2" fill="#7040c0"/>
<rect x="267.6" y="512.0" width="1.4" height="2.2" fill="#d02828"/><rect x="269.0" y="512.4" width="1.3" height="2" fill="#7040c0"/>
<rect x="163.5" y="538.7" width="1.4" height="2.2" fill="#d02828"/><rect x="164.9" y="539.1" width="1.3" height="2" fill="#7040c0"/>
<rect x="210.1" y="516.2" width="1.4" height="2.2" fill="#d02828"/><rect x="211.5" y="516.6" width="1.3" height="2" fill="#7040c0"/>
<rect x="256.4" y="493.9" width="1.4" height="2.2" fill="#d02828"/><rect x="257.8" y="494.3" width="1.3" height="2" fill="#7040c0"/>
<rect x="199.0" y="498.2" width="1.4" height="2.2" fill="#d02828"/><rect x="200.4" y="498.6" width="1.3" height="2" fill="#7040c0"/>
<line x1="198.3" y1="496.1" x2="201.5" y2="474.3" stroke="#b4561a" stroke-width="7.5"/>
<line x1="199.8" y1="496.1" x2="203.0" y2="474.3" stroke="#d06820" stroke-width="3"/>
<ellipse cx="201.5" cy="474.3" rx="3.8" ry="2.6" fill="#d4c23c" stroke="#d8661c" stroke-width="1.4"/>
<line x1="357.2" y1="541.3" x2="361.5" y2="519.7" stroke="#b4561a" stroke-width="7.5"/>
<line x1="358.7" y1="541.3" x2="363.0" y2="519.7" stroke="#d06820" stroke-width="3"/>
<ellipse cx="361.5" cy="519.7" rx="3.8" ry="2.6" fill="#d4c23c" stroke="#d8661c" stroke-width="1.4"/>
<line x1="153.9" y1="640.6" x2="156.9" y2="619.4" stroke="#b4561a" stroke-width="7.5"/>
<line x1="155.4" y1="640.6" x2="158.4" y2="619.4" stroke="#d06820" stroke-width="3"/>
<ellipse cx="156.9" cy="619.4" rx="3.8" ry="2.6" fill="#d4c23c" stroke="#d8661c" stroke-width="1.4"/>
<line x1="315.9" y1="687.7" x2="320.1" y2="666.7" stroke="#b4561a" stroke-width="7.5"/>
<line x1="317.4" y1="687.7" x2="321.6" y2="666.7" stroke="#d06820" stroke-width="3"/>
<ellipse cx="320.1" cy="666.7" rx="3.8" ry="2.6" fill="#d4c23c" stroke="#d8661c" stroke-width="1.4"/>
</g>
<path d="M120.8 634.8 L121.7 637.0 L122.6 639.2 L123.6 641.3 L124.6 643.5 L125.6 645.6 L126.7 647.8 L127.8 649.9 L129.0 652.0 L130.2 654.1 L131.5 656.1 L132.7 658.2 L134.1 660.2 L135.4 662.2 L136.8 664.2 L138.2 666.2 L139.7 668.1 L141.2 670.1 L142.8 672.0 L144.3 673.9 L145.9 675.7 L147.6 677.5 L149.3 679.4 L151.0 681.1 L152.7 682.9 L154.5 684.6 L156.3 686.3 L158.2 688.0 L160.0 689.6 L161.9 691.3 L163.9 692.8 L165.8 694.4 L167.8 695.9 L169.8 697.4 L171.9 698.9 L173.9 700.3 L176.0 701.7 L178.2 703.1 L180.3 704.4 L182.5 705.7 L184.7 707.0 L186.9 708.2 L189.1 709.4 L191.4 710.6 L193.7 711.7 L196.0 712.8 L198.3 713.9 L200.6 714.9 L203.0 715.9 L205.4 716.8 L207.7 717.7 L210.2 718.6 L212.6 719.4 L215.0 720.2 L217.4 720.9 L219.9 721.6 L222.4 722.3 L224.9 723.0 L227.3 723.5 L229.8 724.1 L232.3 724.6 L234.9 725.1 L237.4 725.5 L239.9 725.9 L242.4 726.2 L245.0 726.6 L247.5 726.8 L250.1 727.0 L252.6 727.2 L255.2 727.4 L257.7 727.5 L260.2 727.5 L262.8 727.5 L265.3 727.5 L267.9 727.5 L270.4 727.4 L272.9 727.2 L275.5 727.0 L278.0 726.8 L280.5 726.5 L283.0 726.2 L285.5 725.9 L288.0 725.5 L290.5 725.0 L292.9 724.5 L295.4 724.0 L297.8 723.5 L300.3 722.9 L302.7 722.2 L305.1 721.6 L307.4 720.9 L309.8 720.1 L312.2 719.3 L314.5 718.5 L316.8 717.6 L319.1 716.7 L321.4 715.8 L323.6 714.8 L325.9 713.7 L328.1 712.7 L330.3 711.6 L332.4 710.5 L334.6 709.3 L336.7 708.1 L338.8 706.9 L340.8 705.6 L342.9 704.3 L344.9 703.0 L346.9 701.6 L348.8 700.2 L350.7 698.7 L352.6 697.3 L354.5 695.8 L356.3 694.2 L358.1 692.7 L359.9 691.1 L361.6 689.5 L363.3 687.8 L365.0 686.1 L366.6 684.4 L368.2 682.7 L369.8 680.9 L371.3 679.2 L372.8 677.4 L374.3 675.5 L375.7 673.7 L377.1 671.8 L378.4 669.9 L379.7 667.9 L381.0 666.0 L382.2 664.0 L383.4 662.0 L384.6 660.0 L385.7 658.0 L386.8 655.9 L387.8 653.9 L388.8 651.8 L389.7 649.7 L390.6 647.6 L391.5 645.4 L392.3 643.3 L393.1 641.1 L393.9 638.9 L394.6 636.8 L395.2 634.6 L395.8 632.3 L396.4 630.1 L396.9 627.9 L397.4 625.7 L397.8 623.4 L398.2 621.1 L398.6 618.9 L398.9 616.6 L399.2 614.3 L399.4 612.1 L399.6 609.8 L399.7 607.5 L399.8 605.2 L399.9 602.9 L399.9 600.6 L399.8 598.3 L399.8 596.0 L399.6 593.7 L399.5 591.4 L399.3 589.1 L399.0 586.8 L398.7 584.5 L398.4 582.3 L398.0 580.0 L397.6 577.7 L397.1 575.4 L396.6 573.2 L396.0 570.9 L395.4 568.7 L394.8 566.4 L394.1 564.2 L393.4 562.0 L392.7 559.8 L391.9 557.6 L391.0 555.4 L390.1 553.2 L389.2 551.1 L388.3 548.9 L387.3 546.8 L386.2 544.7 L385.2 542.6 L384.1 540.5 L382.9 538.4 L381.7 536.4 L380.5 534.4 L379.2 532.3 L378.0 530.4 L376.6 528.4 L375.3 526.4 L373.9 524.5 L372.4 522.6 L371.0 520.7 L369.4 518.8 L367.9 517.0 L366.3 515.2 L369.4 500.3 L370.9 502.1 L372.5 503.9 L374.0 505.8 L375.5 507.7 L376.9 509.6 L378.3 511.6 L379.7 513.5 L381.0 515.5 L382.3 517.5 L383.6 519.5 L384.8 521.5 L386.0 523.6 L387.2 525.7 L388.3 527.8 L389.4 529.9 L390.4 532.0 L391.4 534.1 L392.4 536.3 L393.3 538.4 L394.2 540.6 L395.0 542.8 L395.8 545.0 L396.6 547.2 L397.3 549.4 L398.0 551.7 L398.6 553.9 L399.2 556.2 L399.8 558.4 L400.3 560.7 L400.8 563.0 L401.2 565.2 L401.6 567.5 L401.9 569.8 L402.2 572.1 L402.5 574.4 L402.7 576.7 L402.9 579.0 L403.0 581.3 L403.1 583.6 L403.1 585.9 L403.1 588.2 L403.0 590.5 L402.9 592.8 L402.8 595.1 L402.6 597.4 L402.4 599.7 L402.1 602.0 L401.8 604.3 L401.5 606.5 L401.1 608.8 L400.6 611.0 L400.1 613.3 L399.6 615.5 L399.0 617.8 L398.4 620.0 L397.8 622.2 L397.1 624.4 L396.3 626.6 L395.5 628.7 L394.7 630.9 L393.8 633.0 L392.9 635.1 L392.0 637.3 L391.0 639.3 L389.9 641.4 L388.9 643.5 L387.8 645.5 L386.6 647.5 L385.4 649.5 L384.2 651.5 L382.9 653.5 L381.6 655.4 L380.2 657.3 L378.8 659.2 L377.4 661.1 L376.0 662.9 L374.5 664.7 L372.9 666.5 L371.3 668.3 L369.7 670.0 L368.1 671.7 L366.4 673.4 L364.7 675.0 L363.0 676.7 L361.2 678.3 L359.4 679.8 L357.5 681.4 L355.7 682.9 L353.8 684.3 L351.8 685.8 L349.9 687.2 L347.9 688.6 L345.9 689.9 L343.8 691.2 L341.7 692.5 L339.6 693.7 L337.5 694.9 L335.4 696.1 L333.2 697.2 L331.0 698.3 L328.8 699.4 L326.5 700.4 L324.3 701.4 L322.0 702.4 L319.7 703.3 L317.4 704.1 L315.0 705.0 L312.7 705.8 L310.3 706.5 L307.9 707.2 L305.5 707.9 L303.0 708.6 L300.6 709.2 L298.1 709.7 L295.7 710.2 L293.2 710.7 L290.7 711.1 L288.2 711.5 L285.7 711.9 L283.2 712.2 L280.7 712.5 L278.1 712.7 L275.6 712.9 L273.1 713.0 L270.5 713.1 L268.0 713.2 L265.4 713.2 L262.8 713.2 L260.3 713.2 L257.7 713.1 L255.2 712.9 L252.6 712.7 L250.0 712.5 L247.5 712.2 L244.9 711.9 L242.4 711.6 L239.9 711.2 L237.3 710.8 L234.8 710.3 L232.3 709.8 L229.8 709.2 L227.3 708.6 L224.8 708.0 L222.3 707.3 L219.8 706.6 L217.4 705.9 L214.9 705.1 L212.5 704.2 L210.1 703.4 L207.7 702.5 L205.3 701.5 L202.9 700.5 L200.6 699.5 L198.2 698.5 L195.9 697.4 L193.6 696.2 L191.4 695.1 L189.1 693.9 L186.9 692.6 L184.7 691.4 L182.5 690.1 L180.3 688.7 L178.2 687.3 L176.1 685.9 L174.0 684.5 L172.0 683.0 L169.9 681.5 L167.9 680.0 L166.0 678.4 L164.0 676.8 L162.1 675.2 L160.2 673.6 L158.4 671.9 L156.6 670.2 L154.8 668.4 L153.0 666.7 L151.3 664.9 L149.6 663.1 L148.0 661.2 L146.3 659.4 L144.7 657.5 L143.2 655.6 L141.7 653.7 L140.2 651.7 L138.8 649.7 L137.4 647.7 L136.0 645.7 L134.7 643.7 L133.4 641.6 L132.1 639.5 L130.9 637.5 L129.7 635.3 L128.6 633.2 L127.5 631.1 L126.5 628.9 L125.5 626.8 L124.5 624.6 L123.6 622.4 L122.7 620.2Z" fill="url(#wallp)"/>
<path d="M382.4 517.6 L380.4 514.6 L378.4 511.6 L376.2 508.7 L374.0 505.8 L371.7 503.0 L369.3 500.2 L366.9 497.5 L364.3 494.8 L361.7 492.2 L359.1 489.7 L356.4 487.2 L353.6 484.8 L350.7 482.5 L347.8 480.2 L344.8 478.0 L341.8 475.8 L338.7 473.8 L335.6 471.8 L332.4 469.8 L329.1 468.0 L325.8 466.2 L322.5 464.5 L319.1 462.9 L315.7 461.3 L312.3 459.9 L308.8 458.5 L305.3 457.2 L301.7 456.0 L298.1 454.9 L294.5 453.8 L290.9 452.8 L287.3 452.0 L283.6 451.2 L279.9 450.5 L276.2 449.8 L272.5 449.3 L268.8 448.9 L265.1 448.5 L261.4 448.2 L257.6 448.1 L253.9 448.0 L250.2 448.0 L246.4 448.0 L242.7 448.2 L239.0 448.5 L235.3 448.8 L231.7 449.2 L228.0 449.8 L224.4 450.4 L220.8 451.1 L217.2 451.9 L213.6 452.7 L210.1 453.7 L206.6 454.7 L203.1 455.8 L199.7 457.0 L196.3 458.3 L192.9 459.7 L189.6 461.1 L186.4 462.7 L183.2 464.3 L180.0 466.0 L176.9 467.7 L173.8 469.6 L170.8 471.5 L167.9 473.5 L165.0 475.6 L162.2 477.7 L159.4 479.9 L156.7 482.2 L154.1 484.5 L151.5 486.9 L149.0 489.4 L146.6 491.9 L144.3 494.5 L142.0 497.1 L139.8 499.8 L137.7 502.6 L135.7 505.4 L133.8 508.3 L131.9 511.2 L130.1 514.2 L128.4 517.2 L126.8 520.3 L125.3 523.4 L123.9 526.5 L122.6 529.7 L121.3 532.9 L120.2 536.1 L119.1 539.4 L118.2 542.7 L117.3 546.1 L116.5 549.4 L115.9 552.8 L115.3 556.2 L114.8 559.7 L114.5 563.1 L114.2 566.6 L114.0 570.0 L113.9 573.5 L114.0 577.0 L114.1 580.5 L114.3 584.0 L114.6 587.4 L115.1 590.9 L115.6 594.4 L116.2 597.9 L116.9 601.3 L117.7 604.8 L118.7 608.2 L119.7 611.6 L120.8 615.0 L122.0 618.4 L123.3 621.8 L124.7 625.1 L126.2 628.4 L127.8 631.6 L129.5 634.9 L131.3 638.1 L133.1 641.2 L135.1 644.3 L137.1 647.4 L139.3 650.4 L141.5 653.4 L143.8 656.3 L146.1 659.2 L148.6 662.0 L151.1 664.7 L153.8 667.4 L156.5 670.1 L159.2 672.7 L162.1 675.2 L165.0 677.6 L167.9 680.0 L171.0 682.3 L174.1 684.5 L177.2 686.7 L180.5 688.8 L183.7 690.8 L187.1 692.7 L190.5 694.6 L193.9 696.4 L197.4 698.0 L200.9 699.6 L204.5 701.2 L208.1 702.6 L211.7 704.0 L215.4 705.2 L219.1 706.4 L222.8 707.5 L226.6 708.5 L230.4 709.4 L234.2 710.2 L238.0 710.9 L241.9 711.5 L245.7 712.0 L249.6 712.5 L253.4 712.8 L257.3 713.0 L261.2 713.2 L265.1 713.2 L268.9 713.2 L272.8 713.1 L276.6 712.8 L280.5 712.5 L284.3 712.1 L288.1 711.6 L291.9 710.9 L295.6 710.2 L299.4 709.4 L303.1 708.5 L306.7 707.6 L310.4 706.5 L314.0 705.3 L317.5 704.1 L321.0 702.7 L324.5 701.3 L327.9 699.8 L331.3 698.2 L334.6 696.5 L337.8 694.8 L341.0 692.9 L344.2 691.0 L347.3 689.0 L350.3 686.9 L353.2 684.8 L356.1 682.5 L358.9 680.2 L361.7 677.9 L364.3 675.4 L366.9 672.9 L369.4 670.3 L371.8 667.7 L374.2 665.0 L376.5 662.3 L378.6 659.5 L380.7 656.6 L382.7 653.7 L384.7 650.7 L386.5 647.7 L388.2 644.6 L389.9 641.5 L391.4 638.4 L392.9 635.2 L394.3 632.0 L395.5 628.7 L396.7 625.4 L397.8 622.1 L398.8 618.8 L399.6 615.4 L400.4 612.0 L401.1 608.6 L401.7 605.2 L402.2 601.7 L402.5 598.3 L402.8 594.8 L403.0 591.3 L403.1 587.8 L403.1 584.4 L403.0 580.9 L402.7 577.4 L402.4 573.9 L402.0 570.4 L401.5 567.0 L400.9 563.5 L400.2 560.1 L399.4 556.6 L398.4 553.2 L397.4 549.8 L396.4 546.5 L395.2 543.1 L393.9 539.8 L392.5 536.5 L391.0 533.3 L389.5 530.1 L387.8 526.9 L386.1 523.7 L384.3 520.6 L382.4 517.6Z M377.2 520.1 L375.3 517.2 L373.3 514.4 L371.2 511.6 L369.1 508.8 L366.9 506.1 L364.6 503.5 L362.3 500.9 L359.9 498.3 L357.4 495.9 L354.8 493.4 L352.2 491.0 L349.6 488.7 L346.8 486.5 L344.0 484.3 L341.2 482.2 L338.3 480.1 L335.3 478.1 L332.3 476.2 L329.2 474.4 L326.1 472.6 L323.0 470.9 L319.8 469.3 L316.6 467.7 L313.3 466.2 L310.0 464.8 L306.7 463.5 L303.3 462.3 L299.9 461.1 L296.5 460.0 L293.0 459.0 L289.6 458.1 L286.1 457.3 L282.5 456.5 L279.0 455.8 L275.5 455.2 L271.9 454.7 L268.4 454.3 L264.8 453.9 L261.2 453.7 L257.7 453.5 L254.1 453.4 L250.5 453.4 L247.0 453.5 L243.4 453.7 L239.8 453.9 L236.3 454.2 L232.8 454.6 L229.3 455.1 L225.8 455.7 L222.3 456.4 L218.9 457.1 L215.5 458.0 L212.1 458.9 L208.8 459.9 L205.4 461.0 L202.2 462.1 L198.9 463.4 L195.7 464.7 L192.5 466.1 L189.4 467.5 L186.3 469.1 L183.3 470.7 L180.3 472.4 L177.4 474.1 L174.5 476.0 L171.7 477.9 L168.9 479.9 L166.2 481.9 L163.6 484.0 L161.0 486.2 L158.5 488.4 L156.0 490.7 L153.6 493.1 L151.3 495.5 L149.1 498.0 L146.9 500.6 L144.8 503.2 L142.8 505.8 L140.9 508.5 L139.0 511.2 L137.2 514.0 L135.5 516.9 L133.9 519.8 L132.4 522.7 L131.0 525.7 L129.6 528.7 L128.3 531.7 L127.1 534.8 L126.1 537.9 L125.0 541.1 L124.1 544.2 L123.3 547.4 L122.6 550.7 L121.9 553.9 L121.4 557.2 L121.0 560.4 L120.6 563.7 L120.3 567.0 L120.2 570.4 L120.1 573.7 L120.1 577.0 L120.2 580.4 L120.5 583.7 L120.8 587.0 L121.2 590.4 L121.7 593.7 L122.3 597.0 L123.0 600.4 L123.8 603.7 L124.7 606.9 L125.6 610.2 L126.7 613.5 L127.9 616.7 L129.1 619.9 L130.5 623.1 L131.9 626.2 L133.4 629.3 L135.0 632.4 L136.7 635.5 L138.5 638.5 L140.4 641.5 L142.4 644.4 L144.4 647.3 L146.5 650.1 L148.7 652.9 L151.0 655.7 L153.4 658.4 L155.8 661.0 L158.3 663.6 L160.9 666.1 L163.5 668.6 L166.2 671.0 L169.0 673.3 L171.8 675.6 L174.8 677.8 L177.7 679.9 L180.8 682.0 L183.8 684.0 L187.0 685.9 L190.2 687.8 L193.4 689.5 L196.7 691.2 L200.0 692.8 L203.4 694.4 L206.8 695.8 L210.3 697.2 L213.7 698.5 L217.3 699.7 L220.8 700.8 L224.4 701.8 L228.0 702.8 L231.6 703.6 L235.2 704.4 L238.9 705.1 L242.6 705.7 L246.3 706.2 L250.0 706.6 L253.7 706.9 L257.4 707.2 L261.1 707.3 L264.8 707.4 L268.5 707.3 L272.2 707.2 L275.9 707.0 L279.5 706.6 L283.2 706.2 L286.8 705.7 L290.4 705.2 L294.0 704.5 L297.6 703.7 L301.1 702.9 L304.6 701.9 L308.1 700.9 L311.5 699.8 L314.9 698.6 L318.3 697.3 L321.6 696.0 L324.9 694.5 L328.1 693.0 L331.3 691.4 L334.4 689.7 L337.5 687.9 L340.5 686.1 L343.4 684.2 L346.3 682.2 L349.1 680.1 L351.9 678.0 L354.6 675.8 L357.2 673.5 L359.7 671.2 L362.2 668.8 L364.6 666.4 L366.9 663.8 L369.2 661.3 L371.4 658.6 L373.5 655.9 L375.5 653.2 L377.4 650.4 L379.2 647.6 L381.0 644.7 L382.6 641.8 L384.2 638.8 L385.7 635.8 L387.1 632.8 L388.4 629.7 L389.6 626.6 L390.8 623.4 L391.8 620.2 L392.7 617.0 L393.6 613.8 L394.3 610.6 L395.0 607.3 L395.5 604.0 L396.0 600.7 L396.4 597.4 L396.7 594.1 L396.8 590.8 L396.9 587.4 L396.9 584.1 L396.8 580.8 L396.6 577.4 L396.3 574.1 L395.9 570.8 L395.4 567.4 L394.8 564.1 L394.1 560.8 L393.4 557.6 L392.5 554.3 L391.5 551.0 L390.5 547.8 L389.4 544.6 L388.1 541.4 L386.8 538.3 L385.4 535.2 L383.9 532.1 L382.4 529.1 L380.7 526.0 L379.0 523.1 L377.2 520.1Z" fill="#d2681f" fill-rule="evenodd"/>
<path d="M381.0 518.3 L379.1 515.3 L377.0 512.3 L374.9 509.4 L372.7 506.6 L370.4 503.8 L368.1 501.1 L365.7 498.4 L363.2 495.8 L360.6 493.2 L358.0 490.7 L355.3 488.2 L352.5 485.8 L349.7 483.5 L346.8 481.3 L343.9 479.1 L340.9 477.0 L337.8 474.9 L334.7 472.9 L331.5 471.0 L328.3 469.2 L325.1 467.4 L321.8 465.8 L318.5 464.2 L315.1 462.6 L311.7 461.2 L308.2 459.8 L304.7 458.5 L301.2 457.3 L297.7 456.2 L294.1 455.2 L290.6 454.2 L286.9 453.4 L283.3 452.6 L279.7 451.9 L276.0 451.3 L272.4 450.7 L268.7 450.3 L265.0 449.9 L261.3 449.7 L257.6 449.5 L253.9 449.4 L250.3 449.4 L246.6 449.5 L242.9 449.6 L239.2 449.9 L235.6 450.2 L232.0 450.7 L228.4 451.2 L224.8 451.8 L221.2 452.5 L217.6 453.2 L214.1 454.1 L210.6 455.0 L207.2 456.1 L203.7 457.2 L200.3 458.4 L197.0 459.6 L193.7 461.0 L190.4 462.4 L187.2 464.0 L184.0 465.5 L180.9 467.2 L177.8 469.0 L174.8 470.8 L171.8 472.7 L168.9 474.6 L166.0 476.7 L163.2 478.8 L160.5 481.0 L157.8 483.2 L155.2 485.5 L152.7 487.9 L150.2 490.4 L147.9 492.9 L145.5 495.4 L143.3 498.0 L141.1 500.7 L139.1 503.4 L137.1 506.2 L135.1 509.1 L133.3 512.0 L131.5 514.9 L129.9 517.9 L128.3 520.9 L126.8 524.0 L125.4 527.1 L124.1 530.2 L122.9 533.4 L121.7 536.6 L120.7 539.9 L119.7 543.1 L118.9 546.4 L118.1 549.8 L117.5 553.1 L116.9 556.5 L116.4 559.9 L116.1 563.3 L115.8 566.7 L115.6 570.1 L115.6 573.6 L115.6 577.0 L115.7 580.4 L115.9 583.9 L116.2 587.3 L116.7 590.8 L117.2 594.2 L117.8 597.7 L118.5 601.1 L119.3 604.5 L120.2 607.9 L121.2 611.3 L122.4 614.6 L123.5 618.0 L124.8 621.3 L126.2 624.6 L127.7 627.8 L129.3 631.0 L131.0 634.2 L132.7 637.4 L134.6 640.5 L136.5 643.6 L138.5 646.6 L140.6 649.6 L142.8 652.5 L145.1 655.4 L147.4 658.2 L149.9 661.0 L152.4 663.8 L155.0 666.4 L157.6 669.0 L160.3 671.6 L163.2 674.1 L166.0 676.5 L169.0 678.8 L172.0 681.1 L175.0 683.3 L178.2 685.5 L181.3 687.5 L184.6 689.5 L187.9 691.4 L191.2 693.2 L194.6 695.0 L198.1 696.7 L201.5 698.3 L205.1 699.8 L208.6 701.2 L212.2 702.5 L215.9 703.8 L219.5 704.9 L223.2 706.0 L227.0 707.0 L230.7 707.9 L234.5 708.7 L238.3 709.4 L242.1 710.0 L245.9 710.5 L249.7 710.9 L253.5 711.3 L257.3 711.5 L261.2 711.6 L265.0 711.7 L268.8 711.6 L272.6 711.5 L276.4 711.3 L280.2 711.0 L284.0 710.5 L287.8 710.0 L291.5 709.4 L295.2 708.7 L298.9 707.9 L302.6 707.1 L306.2 706.1 L309.8 705.0 L313.3 703.9 L316.8 702.6 L320.3 701.3 L323.7 699.9 L327.1 698.4 L330.4 696.8 L333.7 695.2 L336.9 693.4 L340.1 691.6 L343.2 689.7 L346.2 687.7 L349.2 685.7 L352.1 683.5 L355.0 681.3 L357.8 679.1 L360.5 676.7 L363.1 674.3 L365.7 671.8 L368.2 669.3 L370.6 666.7 L372.9 664.0 L375.1 661.3 L377.3 658.5 L379.3 655.7 L381.3 652.8 L383.2 649.9 L385.0 646.9 L386.8 643.9 L388.4 640.8 L389.9 637.7 L391.4 634.6 L392.7 631.4 L394.0 628.2 L395.1 624.9 L396.2 621.6 L397.2 618.3 L398.0 615.0 L398.8 611.6 L399.5 608.3 L400.1 604.9 L400.5 601.5 L400.9 598.1 L401.2 594.6 L401.4 591.2 L401.5 587.7 L401.4 584.3 L401.3 580.8 L401.1 577.4 L400.8 574.0 L400.4 570.5 L399.9 567.1 L399.3 563.7 L398.6 560.3 L397.8 556.9 L396.9 553.5 L395.9 550.2 L394.8 546.8 L393.6 543.5 L392.4 540.3 L391.0 537.0 L389.6 533.8 L388.0 530.6 L386.4 527.5 L384.7 524.4 L382.9 521.3 L381.0 518.3Z" fill="none" stroke="#dcc840" stroke-width="1.1"/>
<path d="M378.5 519.5 L376.6 516.5 L374.6 513.7 L372.5 510.8 L370.4 508.0 L368.2 505.3 L365.9 502.6 L363.5 500.0 L361.0 497.4 L358.5 494.9 L356.0 492.4 L353.3 490.0 L350.6 487.7 L347.8 485.4 L345.0 483.2 L342.1 481.1 L339.2 479.0 L336.2 477.0 L333.2 475.1 L330.1 473.2 L326.9 471.4 L323.7 469.7 L320.5 468.0 L317.3 466.5 L313.9 465.0 L310.6 463.5 L307.2 462.2 L303.8 460.9 L300.4 459.8 L296.9 458.7 L293.4 457.7 L289.9 456.7 L286.4 455.9 L282.8 455.1 L279.3 454.4 L275.7 453.8 L272.1 453.3 L268.5 452.9 L264.9 452.5 L261.3 452.2 L257.6 452.1 L254.0 452.0 L250.4 452.0 L246.8 452.1 L243.2 452.2 L239.6 452.5 L236.1 452.8 L232.5 453.2 L229.0 453.7 L225.4 454.3 L221.9 455.0 L218.5 455.8 L215.0 456.6 L211.6 457.5 L208.2 458.5 L204.8 459.6 L201.5 460.8 L198.2 462.0 L195.0 463.4 L191.8 464.8 L188.6 466.2 L185.5 467.8 L182.4 469.4 L179.4 471.2 L176.4 472.9 L173.5 474.8 L170.7 476.7 L167.9 478.7 L165.1 480.8 L162.5 482.9 L159.9 485.1 L157.3 487.4 L154.8 489.7 L152.4 492.1 L150.1 494.6 L147.8 497.1 L145.6 499.7 L143.5 502.3 L141.5 505.0 L139.5 507.7 L137.6 510.5 L135.8 513.3 L134.1 516.2 L132.5 519.1 L130.9 522.1 L129.5 525.1 L128.1 528.1 L126.8 531.2 L125.6 534.3 L124.5 537.5 L123.5 540.6 L122.6 543.8 L121.7 547.1 L121.0 550.3 L120.3 553.6 L119.8 556.9 L119.3 560.2 L119.0 563.6 L118.7 566.9 L118.5 570.3 L118.5 573.6 L118.5 577.0 L118.6 580.4 L118.8 583.8 L119.2 587.2 L119.6 590.5 L120.1 593.9 L120.7 597.3 L121.4 600.6 L122.2 604.0 L123.1 607.3 L124.1 610.6 L125.1 613.9 L126.3 617.1 L127.6 620.4 L129.0 623.6 L130.4 626.8 L131.9 629.9 L133.6 633.1 L135.3 636.2 L137.1 639.2 L139.0 642.2 L141.0 645.2 L143.0 648.1 L145.2 651.0 L147.4 653.8 L149.7 656.6 L152.1 659.3 L154.6 662.0 L157.1 664.6 L159.7 667.1 L162.4 669.6 L165.1 672.1 L167.9 674.4 L170.8 676.7 L173.8 679.0 L176.8 681.1 L179.8 683.2 L182.9 685.2 L186.1 687.2 L189.3 689.1 L192.6 690.9 L195.9 692.6 L199.3 694.2 L202.7 695.8 L206.2 697.2 L209.7 698.6 L213.2 699.9 L216.8 701.1 L220.4 702.3 L224.0 703.3 L227.6 704.3 L231.3 705.2 L235.0 705.9 L238.7 706.6 L242.4 707.2 L246.1 707.7 L249.9 708.1 L253.6 708.5 L257.4 708.7 L261.1 708.9 L264.9 708.9 L268.6 708.9 L272.3 708.7 L276.1 708.5 L279.8 708.2 L283.5 707.8 L287.2 707.3 L290.8 706.7 L294.4 706.0 L298.1 705.2 L301.6 704.4 L305.2 703.4 L308.7 702.4 L312.2 701.3 L315.6 700.0 L319.0 698.8 L322.4 697.4 L325.7 695.9 L328.9 694.4 L332.1 692.7 L335.3 691.0 L338.4 689.2 L341.4 687.4 L344.4 685.4 L347.3 683.4 L350.2 681.3 L353.0 679.2 L355.7 677.0 L358.4 674.7 L360.9 672.3 L363.4 669.9 L365.9 667.4 L368.2 664.9 L370.5 662.3 L372.7 659.6 L374.8 656.9 L376.8 654.1 L378.8 651.3 L380.7 648.4 L382.4 645.5 L384.1 642.5 L385.7 639.5 L387.2 636.5 L388.6 633.4 L390.0 630.3 L391.2 627.1 L392.3 623.9 L393.4 620.7 L394.3 617.5 L395.2 614.2 L395.9 611.0 L396.6 607.6 L397.2 604.3 L397.6 601.0 L398.0 597.6 L398.3 594.3 L398.5 590.9 L398.5 587.5 L398.5 584.2 L398.4 580.8 L398.2 577.4 L397.9 574.0 L397.5 570.7 L397.0 567.3 L396.4 564.0 L395.7 560.6 L394.9 557.3 L394.1 554.0 L393.1 550.7 L392.0 547.5 L390.9 544.2 L389.6 541.0 L388.3 537.8 L386.9 534.7 L385.4 531.6 L383.8 528.5 L382.1 525.4 L380.4 522.4 L378.5 519.5Z" fill="none" stroke="#dcc840" stroke-width="1.1"/>
<path d="M382.4 517.6 L380.4 514.6 L378.4 511.6 L376.2 508.7 L374.0 505.8 L371.7 503.0 L369.3 500.2 L366.9 497.5 L364.3 494.8 L361.7 492.2 L359.1 489.7 L356.4 487.2 L353.6 484.8 L350.7 482.5 L347.8 480.2 L344.8 478.0 L341.8 475.8 L338.7 473.8 L335.6 471.8 L332.4 469.8 L329.1 468.0 L325.8 466.2 L322.5 464.5 L319.1 462.9 L315.7 461.3 L312.3 459.9 L308.8 458.5 L305.3 457.2 L301.7 456.0 L298.1 454.9 L294.5 453.8 L290.9 452.8 L287.3 452.0 L283.6 451.2 L279.9 450.5 L276.2 449.8 L272.5 449.3 L268.8 448.9 L265.1 448.5 L261.4 448.2 L257.6 448.1 L253.9 448.0 L250.2 448.0 L246.4 448.0 L242.7 448.2 L239.0 448.5 L235.3 448.8 L231.7 449.2 L228.0 449.8 L224.4 450.4 L220.8 451.1 L217.2 451.9 L213.6 452.7 L210.1 453.7 L206.6 454.7 L203.1 455.8 L199.7 457.0 L196.3 458.3 L192.9 459.7 L189.6 461.1 L186.4 462.7 L183.2 464.3 L180.0 466.0 L176.9 467.7 L173.8 469.6 L170.8 471.5 L167.9 473.5 L165.0 475.6 L162.2 477.7 L159.4 479.9 L156.7 482.2 L154.1 484.5 L151.5 486.9 L149.0 489.4 L146.6 491.9 L144.3 494.5 L142.0 497.1 L139.8 499.8 L137.7 502.6 L135.7 505.4 L133.8 508.3 L131.9 511.2 L130.1 514.2 L128.4 517.2 L126.8 520.3 L125.3 523.4 L123.9 526.5 L122.6 529.7 L121.3 532.9 L120.2 536.1 L119.1 539.4 L118.2 542.7 L117.3 546.1 L116.5 549.4 L115.9 552.8 L115.3 556.2 L114.8 559.7 L114.5 563.1 L114.2 566.6 L114.0 570.0 L113.9 573.5 L114.0 577.0 L114.1 580.5 L114.3 584.0 L114.6 587.4 L115.1 590.9 L115.6 594.4 L116.2 597.9 L116.9 601.3 L117.7 604.8 L118.7 608.2 L119.7 611.6 L120.8 615.0 L122.0 618.4 L123.3 621.8 L124.7 625.1 L126.2 628.4 L127.8 631.6 L129.5 634.9 L131.3 638.1 L133.1 641.2 L135.1 644.3 L137.1 647.4 L139.3 650.4 L141.5 653.4 L143.8 656.3 L146.1 659.2 L148.6 662.0 L151.1 664.7 L153.8 667.4 L156.5 670.1 L159.2 672.7 L162.1 675.2 L165.0 677.6 L167.9 680.0 L171.0 682.3 L174.1 684.5 L177.2 686.7 L180.5 688.8 L183.7 690.8 L187.1 692.7 L190.5 694.6 L193.9 696.4 L197.4 698.0 L200.9 699.6 L204.5 701.2 L208.1 702.6 L211.7 704.0 L215.4 705.2 L219.1 706.4 L222.8 707.5 L226.6 708.5 L230.4 709.4 L234.2 710.2 L238.0 710.9 L241.9 711.5 L245.7 712.0 L249.6 712.5 L253.4 712.8 L257.3 713.0 L261.2 713.2 L265.1 713.2 L268.9 713.2 L272.8 713.1 L276.6 712.8 L280.5 712.5 L284.3 712.1 L288.1 711.6 L291.9 710.9 L295.6 710.2 L299.4 709.4 L303.1 708.5 L306.7 707.6 L310.4 706.5 L314.0 705.3 L317.5 704.1 L321.0 702.7 L324.5 701.3 L327.9 699.8 L331.3 698.2 L334.6 696.5 L337.8 694.8 L341.0 692.9 L344.2 691.0 L347.3 689.0 L350.3 686.9 L353.2 684.8 L356.1 682.5 L358.9 680.2 L361.7 677.9 L364.3 675.4 L366.9 672.9 L369.4 670.3 L371.8 667.7 L374.2 665.0 L376.5 662.3 L378.6 659.5 L380.7 656.6 L382.7 653.7 L384.7 650.7 L386.5 647.7 L388.2 644.6 L389.9 641.5 L391.4 638.4 L392.9 635.2 L394.3 632.0 L395.5 628.7 L396.7 625.4 L397.8 622.1 L398.8 618.8 L399.6 615.4 L400.4 612.0 L401.1 608.6 L401.7 605.2 L402.2 601.7 L402.5 598.3 L402.8 594.8 L403.0 591.3 L403.1 587.8 L403.1 584.4 L403.0 580.9 L402.7 577.4 L402.4 573.9 L402.0 570.4 L401.5 567.0 L400.9 563.5 L400.2 560.1 L399.4 556.6 L398.4 553.2 L397.4 549.8 L396.4 546.5 L395.2 543.1 L393.9 539.8 L392.5 536.5 L391.0 533.3 L389.5 530.1 L387.8 526.9 L386.1 523.7 L384.3 520.6 L382.4 517.6Z" fill="none" stroke="#b85a1a" stroke-width="0.8"/>
</g>
</svg>
<rect x="0" y="882" width="708" height="44" fill="#ffffff"/>
<rect x="0" y="907.9" width="568" height="3" fill="#ee6b22"/>
<polygon points="567.8,901.7 575.9,909.4 567.8,917.2" fill="#ee6b22"/>
<text x="565.5" y="894.5" text-anchor="end" font-family="Liberation Sans" font-size="13" fill="#a0a0a0" textLength="38.5">81408</text>
<rect x="582" y="0" width="126" height="882" fill="#ffffff"/>
<rect x="631" y="903.0" width="2" height="1" fill="#a4a4a4"/><rect x="651" y="903.0" width="2" height="1" fill="#a4a4a4"/>
<rect x="628" y="886.0" width="5" height="1" fill="#a4a4a4"/><rect x="651" y="886.0" width="5" height="1" fill="#a4a4a4"/>
<text x="663" y="890.1" font-family="Liberation Sans" font-size="14" fill="#a0a0a0" textLength="25.7" lengthAdjust="spacing">0,50</text>
<rect x="628" y="869.0" width="5" height="1" fill="#a4a4a4"/><rect x="651" y="869.0" width="5" height="1" fill="#a4a4a4"/>
<text x="663" y="873.1" font-family="Liberation Sans" font-size="14" fill="#a0a0a0" textLength="25.7" lengthAdjust="spacing">0,80</text>
<rect x="631" y="853.0" width="2" height="1" fill="#a4a4a4"/><rect x="651" y="853.0" width="2" height="1" fill="#a4a4a4"/>
<rect x="628" y="836.0" width="5" height="1" fill="#a4a4a4"/><rect x="651" y="836.0" width="5" height="1" fill="#a4a4a4"/>
<text x="663" y="840.1" font-family="Liberation Sans" font-size="14" fill="#a0a0a0" textLength="25.7" lengthAdjust="spacing">1,40</text>
<rect x="631" y="819.0" width="2" height="1" fill="#a4a4a4"/><rect x="651" y="819.0" width="2" height="1" fill="#a4a4a4"/>
<rect x="628" y="802.0" width="5" height="1" fill="#a4a4a4"/><rect x="651" y="802.0" width="5" height="1" fill="#a4a4a4"/>
<text x="663" y="806.1" font-family="Liberation Sans" font-size="14" fill="#a0a0a0" textLength="25.7" lengthAdjust="spacing">2,00</text>
<rect x="628" y="785.0" width="5" height="1" fill="#a4a4a4"/><rect x="651" y="785.0" width="5" height="1" fill="#a4a4a4"/>
<text x="663" y="789.1" font-family="Liberation Sans" font-size="14" fill="#a0a0a0" textLength="25.7" lengthAdjust="spacing">2,30</text>
<rect x="631" y="769.0" width="2" height="1" fill="#a4a4a4"/><rect x="651" y="769.0" width="2" height="1" fill="#a4a4a4"/>
<rect x="628" y="752.0" width="5" height="1" fill="#a4a4a4"/><rect x="651" y="752.0" width="5" height="1" fill="#a4a4a4"/>
<text x="663" y="756.1" font-family="Liberation Sans" font-size="14" fill="#a0a0a0" textLength="25.7" lengthAdjust="spacing">2,90</text>
<rect x="631" y="735.0" width="2" height="1" fill="#a4a4a4"/><rect x="651" y="735.0" width="2" height="1" fill="#a4a4a4"/>
<rect x="628" y="718.0" width="5" height="1" fill="#a4a4a4"/><rect x="651" y="718.0" width="5" height="1" fill="#a4a4a4"/>
<text x="663" y="722.1" font-family="Liberation Sans" font-size="14" fill="#a0a0a0" textLength="25.7" lengthAdjust="spacing">3,50</text>
<rect x="628" y="701.0" width="5" height="1" fill="#a4a4a4"/><rect x="651" y="701.0" width="5" height="1" fill="#a4a4a4"/>
<text x="663" y="705.1" font-family="Liberation Sans" font-size="14" fill="#a0a0a0" textLength="25.7" lengthAdjust="spacing">3,80</text>
<rect x="631" y="685.0" width="2" height="1" fill="#a4a4a4"/><rect x="651" y="685.0" width="2" height="1" fill="#a4a4a4"/>
<rect x="628" y="668.0" width="5" height="1" fill="#a4a4a4"/><rect x="651" y="668.0" width="5" height="1" fill="#a4a4a4"/>
<text x="663" y="672.1" font-family="Liberation Sans" font-size="14" fill="#a0a0a0" textLength="25.7" lengthAdjust="spacing">4,40</text>
<rect x="631" y="651.0" width="2" height="1" fill="#a4a4a4"/><rect x="651" y="651.0" width="2" height="1" fill="#a4a4a4"/>
<rect x="628" y="634.0" width="5" height="1" fill="#a4a4a4"/><rect x="651" y="634.0" width="5" height="1" fill="#a4a4a4"/>
<text x="663" y="638.1" font-family="Liberation Sans" font-size="14" fill="#a0a0a0" textLength="25.7" lengthAdjust="spacing">5,00</text>
<rect x="628" y="618.0" width="5" height="1" fill="#a4a4a4"/><rect x="651" y="618.0" width="5" height="1" fill="#a4a4a4"/>
<text x="663" y="622.1" font-family="Liberation Sans" font-size="14" fill="#a0a0a0" textLength="25.7" lengthAdjust="spacing">5,30</text>
<rect x="631" y="601.0" width="2" height="1" fill="#a4a4a4"/><rect x="651" y="601.0" width="2" height="1" fill="#a4a4a4"/>
<rect x="628" y="584.0" width="5" height="1" fill="#a4a4a4"/><rect x="651" y="584.0" width="5" height="1" fill="#a4a4a4"/>
<text x="663" y="588.1" font-family="Liberation Sans" font-size="14" fill="#a0a0a0" textLength="25.7" lengthAdjust="spacing">5,90</text>
<rect x="631" y="567.0" width="2" height="1" fill="#a4a4a4"/><rect x="651" y="567.0" width="2" height="1" fill="#a4a4a4"/>
<rect x="628" y="550.0" width="5" height="1" fill="#a4a4a4"/><rect x="651" y="550.0" width="5" height="1" fill="#a4a4a4"/>
<text x="663" y="554.1" font-family="Liberation Sans" font-size="14" fill="#a0a0a0" textLength="25.7" lengthAdjust="spacing">6,50</text>
<rect x="628" y="534.0" width="5" height="1" fill="#a4a4a4"/><rect x="651" y="534.0" width="5" height="1" fill="#a4a4a4"/>
<text x="663" y="538.1" font-family="Liberation Sans" font-size="14" fill="#a0a0a0" textLength="25.7" lengthAdjust="spacing">6,80</text>
<rect x="631" y="517.0" width="2" height="1" fill="#a4a4a4"/><rect x="651" y="517.0" width="2" height="1" fill="#a4a4a4"/>
<rect x="628" y="500.0" width="5" height="1" fill="#a4a4a4"/><rect x="651" y="500.0" width="5" height="1" fill="#a4a4a4"/>
<text x="663" y="504.1" font-family="Liberation Sans" font-size="14" fill="#a0a0a0" textLength="25.7" lengthAdjust="spacing">7,40</text>
<rect x="631" y="483.0" width="2" height="1" fill="#a4a4a4"/><rect x="651" y="483.0" width="2" height="1" fill="#a4a4a4"/>
<rect x="628" y="466.0" width="5" height="1" fill="#a4a4a4"/><rect x="651" y="466.0" width="5" height="1" fill="#a4a4a4"/>
<text x="663" y="470.1" font-family="Liberation Sans" font-size="14" fill="#a0a0a0" textLength="25.7" lengthAdjust="spacing">8,00</text>
<rect x="628" y="450.0" width="5" height="1" fill="#a4a4a4"/><rect x="651" y="450.0" width="5" height="1" fill="#a4a4a4"/>
<text x="663" y="454.1" font-family="Liberation Sans" font-size="14" fill="#a0a0a0" textLength="25.7" lengthAdjust="spacing">8,30</text>
<rect x="631" y="433.0" width="2" height="1" fill="#a4a4a4"/><rect x="651" y="433.0" width="2" height="1" fill="#a4a4a4"/>
<rect x="628" y="416.0" width="5" height="1" fill="#a4a4a4"/><rect x="651" y="416.0" width="5" height="1" fill="#a4a4a4"/>
<text x="663" y="420.1" font-family="Liberation Sans" font-size="14" fill="#a0a0a0" textLength="25.7" lengthAdjust="spacing">8,90</text>
<rect x="631" y="399.0" width="2" height="1" fill="#a4a4a4"/><rect x="651" y="399.0" width="2" height="1" fill="#a4a4a4"/>
<rect x="628" y="382.0" width="5" height="1" fill="#a4a4a4"/><rect x="651" y="382.0" width="5" height="1" fill="#a4a4a4"/>
<text x="663" y="386.1" font-family="Liberation Sans" font-size="14" fill="#a0a0a0" textLength="25.7" lengthAdjust="spacing">9,50</text>
<rect x="628" y="366.0" width="5" height="1" fill="#a4a4a4"/><rect x="651" y="366.0" width="5" height="1" fill="#a4a4a4"/>
<text x="663" y="370.1" font-family="Liberation Sans" font-size="14" fill="#a0a0a0" textLength="25.7" lengthAdjust="spacing">9,80</text>
<rect x="631" y="349.0" width="2" height="1" fill="#a4a4a4"/><rect x="651" y="349.0" width="2" height="1" fill="#a4a4a4"/>
<rect x="628" y="332.0" width="5" height="1" fill="#a4a4a4"/><rect x="651" y="332.0" width="5" height="1" fill="#a4a4a4"/>
<text x="663" y="336.1" font-family="Liberation Sans" font-size="14" fill="#a0a0a0" textLength="33" lengthAdjust="spacing">10,40</text>
<rect x="631" y="315.0" width="2" height="1" fill="#a4a4a4"/><rect x="651" y="315.0" width="2" height="1" fill="#a4a4a4"/>
<rect x="628" y="298.0" width="5" height="1" fill="#a4a4a4"/><rect x="651" y="298.0" width="5" height="1" fill="#a4a4a4"/>
<text x="663" y="302.1" font-family="Liberation Sans" font-size="14" fill="#a0a0a0" textLength="33" lengthAdjust="spacing">11,00</text>
<rect x="628" y="282.0" width="5" height="1" fill="#a4a4a4"/><rect x="651" y="282.0" width="5" height="1" fill="#a4a4a4"/>
<text x="663" y="286.1" font-family="Liberation Sans" font-size="14" fill="#a0a0a0" textLength="33" lengthAdjust="spacing">11,30</text>
<rect x="631" y="265.0" width="2" height="1" fill="#a4a4a4"/><rect x="651" y="265.0" width="2" height="1" fill="#a4a4a4"/>
<rect x="628" y="248.0" width="5" height="1" fill="#a4a4a4"/><rect x="651" y="248.0" width="5" height="1" fill="#a4a4a4"/>
<text x="663" y="252.1" font-family="Liberation Sans" font-size="14" fill="#a0a0a0" textLength="33" lengthAdjust="spacing">11,90</text>
<rect x="631" y="231.0" width="2" height="1" fill="#a4a4a4"/><rect x="651" y="231.0" width="2" height="1" fill="#a4a4a4"/>
<rect x="628" y="215.0" width="5" height="1" fill="#a4a4a4"/><rect x="651" y="215.0" width="5" height="1" fill="#a4a4a4"/>
<text x="663" y="219.1" font-family="Liberation Sans" font-size="14" fill="#a0a0a0" textLength="33" lengthAdjust="spacing">12,50</text>
<rect x="628" y="198.0" width="5" height="1" fill="#a4a4a4"/><rect x="651" y="198.0" width="5" height="1" fill="#a4a4a4"/>
<text x="663" y="202.1" font-family="Liberation Sans" font-size="14" fill="#a0a0a0" textLength="33" lengthAdjust="spacing">12,80</text>
<rect x="631" y="181.0" width="2" height="1" fill="#a4a4a4"/><rect x="651" y="181.0" width="2" height="1" fill="#a4a4a4"/>
<rect x="628" y="164.0" width="5" height="1" fill="#a4a4a4"/><rect x="651" y="164.0" width="5" height="1" fill="#a4a4a4"/>
<text x="663" y="168.1" font-family="Liberation Sans" font-size="14" fill="#a0a0a0" textLength="33" lengthAdjust="spacing">13,40</text>
<rect x="631" y="147.0" width="2" height="1" fill="#a4a4a4"/><rect x="651" y="147.0" width="2" height="1" fill="#a4a4a4"/>
<rect x="628" y="131.0" width="5" height="1" fill="#a4a4a4"/><rect x="651" y="131.0" width="5" height="1" fill="#a4a4a4"/>
<text x="663" y="135.1" font-family="Liberation Sans" font-size="14" fill="#a0a0a0" textLength="33" lengthAdjust="spacing">14,00</text>
<rect x="628" y="114.0" width="5" height="1" fill="#a4a4a4"/><rect x="651" y="114.0" width="5" height="1" fill="#a4a4a4"/>
<text x="663" y="118.1" font-family="Liberation Sans" font-size="14" fill="#a0a0a0" textLength="33" lengthAdjust="spacing">14,30</text>
<rect x="631" y="97.0" width="2" height="1" fill="#a4a4a4"/><rect x="651" y="97.0" width="2" height="1" fill="#a4a4a4"/>
<rect x="628" y="80.0" width="5" height="1" fill="#a4a4a4"/><rect x="651" y="80.0" width="5" height="1" fill="#a4a4a4"/>
<text x="663" y="84.1" font-family="Liberation Sans" font-size="14" fill="#a0a0a0" textLength="33" lengthAdjust="spacing">14,90</text>
<rect x="631" y="63.0" width="2" height="1" fill="#a4a4a4"/><rect x="651" y="63.0" width="2" height="1" fill="#a4a4a4"/>
<rect x="628" y="47.0" width="5" height="1" fill="#a4a4a4"/><rect x="651" y="47.0" width="5" height="1" fill="#a4a4a4"/>
<text x="663" y="51.1" font-family="Liberation Sans" font-size="14" fill="#a0a0a0" textLength="33" lengthAdjust="spacing">15,50</text>
<rect x="628" y="30.0" width="5" height="1" fill="#a4a4a4"/><rect x="651" y="30.0" width="5" height="1" fill="#a4a4a4"/>
<text x="663" y="34.1" font-family="Liberation Sans" font-size="14" fill="#a0a0a0" textLength="33" lengthAdjust="spacing">15,80</text>
<rect x="628" y="13.0" width="5" height="1" fill="#a4a4a4"/><rect x="651" y="13.0" width="5" height="1" fill="#a4a4a4"/>
<text x="663" y="17.1" font-family="Liberation Sans" font-size="14" fill="#a0a0a0" textLength="33" lengthAdjust="spacing">16,10</text>
<rect x="663" y="888" width="25" height="1" fill="#a0a0a0"/>
<text x="663" y="896.8" font-family="Liberation Sans" font-size="14" fill="#a0a0a0" textLength="25.7" lengthAdjust="spacing">0,20</text>
<text x="662.5" y="917.5" font-family="Liberation Sans" font-size="14" fill="#a0a0a0" textLength="14.5" lengthAdjust="spacing">(1)</text>
<text x="588" y="9.6" font-family="Liberation Sans" font-size="14" fill="#a0a0a0" textLength="33.5" lengthAdjust="spacing">16,10</text>
<text x="587.6" y="30.3" font-family="Liberation Sans" font-size="14" fill="#a0a0a0" textLength="23" lengthAdjust="spacing">(54)</text>
<rect x="641.2" y="14" width="2.7" height="888.6" fill="#ee6b22"/>
<path d="M634.9 12.7 V10.4 L642.5 5 L650 10.4 V12.7Z" fill="#ee6b22"/>
<path d="M634.7 904 H650.2 V906.5 L642.5 911.8 L634.7 906.5Z" fill="#ee6b22"/>
<path d="M638 927 V921.5 a4.3 4.3 0 0 1 8.6 0 V922.5" fill="none" stroke="#ee6b22" stroke-width="2.3"/>
<rect x="636" y="924.5" width="13" height="4" fill="#ee6b22"/>
<rect x="690.3" y="916.8" width="2.9" height="3.6" rx="0.9" fill="#7b7b7b" transform="rotate(0 691.75 925.2)"/>
<rect x="690.3" y="916.8" width="2.9" height="3.6" rx="0.9" fill="#7b7b7b" transform="rotate(45 691.75 925.2)"/>
<rect x="690.3" y="916.8" width="2.9" height="3.6" rx="0.9" fill="#7b7b7b" transform="rotate(90 691.75 925.2)"/>
<rect x="690.3" y="916.8" width="2.9" height="3.6" rx="0.9" fill="#7b7b7b" transform="rotate(135 691.75 925.2)"/>
<rect x="690.3" y="916.8" width="2.9" height="3.6" rx="0.9" fill="#7b7b7b" transform="rotate(180 691.75 925.2)"/>
<rect x="690.3" y="916.8" width="2.9" height="3.6" rx="0.9" fill="#7b7b7b" transform="rotate(225 691.75 925.2)"/>
<rect x="690.3" y="916.8" width="2.9" height="3.6" rx="0.9" fill="#7b7b7b" transform="rotate(270 691.75 925.2)"/>
<rect x="690.3" y="916.8" width="2.9" height="3.6" rx="0.9" fill="#7b7b7b" transform="rotate(315 691.75 925.2)"/>
<circle cx="691.75" cy="925.2" r="6.1" fill="#fff" stroke="#7b7b7b" stroke-width="1.5"/><circle cx="691.75" cy="925.2" r="3.9" fill="none" stroke="#ee6b22" stroke-width="1.35"/>
<g class="pt"><rect x="708" y="0" width="438" height="889" fill="#fff"/>
<rect x="1146" y="0" width="18" height="889" fill="#f0f0f0"/>
<rect x="1153" y="35.9" width="5.2" height="819" fill="#858585"/>
<rect x="708.5" y="-0.5" width="411" height="26" fill="#fff" stroke="#7a7a7a" stroke-width="1"/>
<rect x="725.00" y="4.05" width="3.0" height="3.4" rx="1" fill="#7b7b7b" transform="rotate(0 726.5 12.45)"/>
<rect x="725.00" y="4.05" width="3.0" height="3.4" rx="1" fill="#7b7b7b" transform="rotate(45 726.5 12.45)"/>
<rect x="725.00" y="4.05" width="3.0" height="3.4" rx="1" fill="#7b7b7b" transform="rotate(90 726.5 12.45)"/>
<rect x="725.00" y="4.05" width="3.0" height="3.4" rx="1" fill="#7b7b7b" transform="rotate(135 726.5 12.45)"/>
<rect x="725.00" y="4.05" width="3.0" height="3.4" rx="1" fill="#7b7b7b" transform="rotate(180 726.5 12.45)"/>
<rect x="725.00" y="4.05" width="3.0" height="3.4" rx="1" fill="#7b7b7b" transform="rotate(225 726.5 12.45)"/>
<rect x="725.00" y="4.05" width="3.0" height="3.4" rx="1" fill="#7b7b7b" transform="rotate(270 726.5 12.45)"/>
<rect x="725.00" y="4.05" width="3.0" height="3.4" rx="1" fill="#7b7b7b" transform="rotate(315 726.5 12.45)"/>
<circle cx="726.5" cy="12.45" r="6.1" fill="#fff" stroke="#7b7b7b" stroke-width="1.5"/>
<circle cx="726.5" cy="12.45" r="3.9" fill="none" stroke="#ee6b22" stroke-width="1.15" stroke-dasharray="2.6 0.46"/>
<path d="M748.15 13.1 V8.7 a3.1 3.1 0 0 1 3.1 -3.5 h2.6 a3.1 3.1 0 0 1 3.1 3.5 V13.1" fill="none" stroke="#808080" stroke-width="2.2"/>
<rect x="745.4" y="12.7" width="14.3" height="7.9" rx="1.6" fill="#808080"/>
<circle cx="751.8" cy="16.5" r="1.6" fill="#fff"/><rect x="751.8" y="15.85" width="3.2" height="1.3" fill="#fff"/>
<text x="768.6" y="18.4" font-family="Liberation Sans" font-size="13.6" fill="#000" stroke="#000" stroke-width="0.1" textLength="95" lengthAdjust="spacing">0.30mm DRAFT</text>
<polyline points="1101.4,9.8 1108.2,15.4 1115.0,9.8" fill="none" stroke="#555" stroke-width="1.7"/>
<rect x="1131.00" y="4.05" width="3.0" height="3.4" rx="1" fill="#7b7b7b" transform="rotate(0 1132.5 12.45)"/>
<rect x="1131.00" y="4.05" width="3.0" height="3.4" rx="1" fill="#7b7b7b" transform="rotate(45 1132.5 12.45)"/>
<rect x="1131.00" y="4.05" width="3.0" height="3.4" rx="1" fill="#7b7b7b" transform="rotate(90 1132.5 12.45)"/>
<rect x="1131.00" y="4.05" width="3.0" height="3.4" rx="1" fill="#7b7b7b" transform="rotate(135 1132.5 12.45)"/>
<rect x="1131.00" y="4.05" width="3.0" height="3.4" rx="1" fill="#7b7b7b" transform="rotate(180 1132.5 12.45)"/>
<rect x="1131.00" y="4.05" width="3.0" height="3.4" rx="1" fill="#7b7b7b" transform="rotate(225 1132.5 12.45)"/>
<rect x="1131.00" y="4.05" width="3.0" height="3.4" rx="1" fill="#7b7b7b" transform="rotate(270 1132.5 12.45)"/>
<rect x="1131.00" y="4.05" width="3.0" height="3.4" rx="1" fill="#7b7b7b" transform="rotate(315 1132.5 12.45)"/>
<circle cx="1132.5" cy="12.45" r="6.1" fill="#fff" stroke="#7b7b7b" stroke-width="1.5"/>
<circle cx="1132.5" cy="12.45" r="3.9" fill="none" stroke="#ee6b22" stroke-width="1.15" stroke-dasharray="2.6 0.46"/>
<text x="708.8" y="42.8" font-family="Liberation Sans" font-size="13.6" fill="#000" stroke="#000" stroke-width="0.1" textLength="54" lengthAdjust="spacing">Filament:</text>
<rect x="708.5" y="49.5" width="411" height="26" fill="#fff" stroke="#7a7a7a" stroke-width="1"/>
<rect x="713.7" y="53.8" width="26.5" height="17.1" fill="#ff8000" stroke="#505050" stroke-width="1"/>
<path d="M748.15 63.1 V58.7 a3.1 3.1 0 0 1 3.1 -3.5 h2.6 a3.1 3.1 0 0 1 3.1 3.5 V63.1" fill="none" stroke="#808080" stroke-width="2.2"/>
<rect x="745.4" y="62.7" width="14.3" height="7.9" rx="1.6" fill="#808080"/>
<circle cx="751.8" cy="66.5" r="1.6" fill="#fff"/><rect x="751.8" y="65.85" width="3.2" height="1.3" fill="#fff"/>
<text x="768.6" y="67.8" font-family="Liberation Sans" font-size="13.6" fill="#000" stroke="#000" stroke-width="0.1" textLength="73" lengthAdjust="spacing">Generic PLA</text>
<polyline points="1101.4,59.6 1108.2,65.2 1115.0,59.6" fill="none" stroke="#555" stroke-width="1.7"/>
<rect x="1131.00" y="54.05" width="3.0" height="3.4" rx="1" fill="#7b7b7b" transform="rotate(0 1132.5 62.45)"/>
<rect x="1131.00" y="54.05" width="3.0" height="3.4" rx="1" fill="#7b7b7b" transform="rotate(45 1132.5 62.45)"/>
<rect x="1131.00" y="54.05" width="3.0" height="3.4" rx="1" fill="#7b7b7b" transform="rotate(90 1132.5 62.45)"/>
<rect x="1131.00" y="54.05" width="3.0" height="3.4" rx="1" fill="#7b7b7b" transform="rotate(135 1132.5 62.45)"/>
<rect x="1131.00" y="54.05" width="3.0" height="3.4" rx="1" fill="#7b7b7b" transform="rotate(180 1132.5 62.45)"/>
<rect x="1131.00" y="54.05" width="3.0" height="3.4" rx="1" fill="#7b7b7b" transform="rotate(225 1132.5 62.45)"/>
<rect x="1131.00" y="54.05" width="3.0" height="3.4" rx="1" fill="#7b7b7b" transform="rotate(270 1132.5 62.45)"/>
<rect x="1131.00" y="54.05" width="3.0" height="3.4" rx="1" fill="#7b7b7b" transform="rotate(315 1132.5 62.45)"/>
<circle cx="1132.5" cy="62.45" r="6.1" fill="#fff" stroke="#7b7b7b" stroke-width="1.5"/>
<circle cx="1132.5" cy="62.45" r="3.9" fill="none" stroke="#ee6b22" stroke-width="1.15" stroke-dasharray="2.6 0.46"/>
<text x="708.8" y="93.0" font-family="Liberation Sans" font-size="13.6" fill="#000" stroke="#000" stroke-width="0.1" textLength="43" lengthAdjust="spacing">Printer:</text>
<rect x="708.5" y="99.5" width="411" height="26" fill="#fff" stroke="#7a7a7a" stroke-width="1"/>
<rect x="718.8" y="104.8" width="15.3" height="15.2" fill="none" stroke="#808080" stroke-width="1.3"/>
<rect x="718.2" y="118.3" width="16.5" height="2.3" fill="#808080"/>
<line x1="718.8" y1="109.5" x2="734.1" y2="109.5" stroke="#808080" stroke-width="1"/>
<circle cx="722.9" cy="110.3" r="2.4" fill="#ee6b22"/>
<path d="M748.15 113.1 V108.69999999999999 a3.1 3.1 0 0 1 3.1 -3.5 h2.6 a3.1 3.1 0 0 1 3.1 3.5 V113.1" fill="none" stroke="#808080" stroke-width="2.2"/>
<rect x="745.4" y="112.69999999999999" width="14.3" height="7.9" rx="1.6" fill="#808080"/>
<circle cx="751.8" cy="116.5" r="1.6" fill="#fff"/><rect x="751.8" y="115.85" width="3.2" height="1.3" fill="#fff"/>
<text x="768.6" y="118.3" font-family="Liberation Sans" font-size="13.6" fill="#000" stroke="#000" stroke-width="0.1" textLength="204.4" lengthAdjust="spacing">Original Prusa i3 MK3S &amp; MK3S+</text>
<polyline points="1101.4,109.6 1108.2,115.19999999999999 1115.0,109.6" fill="none" stroke="#555" stroke-width="1.7"/>
<rect x="1131.00" y="104.05" width="3.0" height="3.4" rx="1" fill="#7b7b7b" transform="rotate(0 1132.5 112.45)"/>
<rect x="1131.00" y="104.05" width="3.0" height="3.4" rx="1" fill="#7b7b7b" transform="rotate(45 1132.5 112.45)"/>
<rect x="1131.00" y="104.05" width="3.0" height="3.4" rx="1" fill="#7b7b7b" transform="rotate(90 1132.5 112.45)"/>
<rect x="1131.00" y="104.05" width="3.0" height="3.4" rx="1" fill="#7b7b7b" transform="rotate(135 1132.5 112.45)"/>
<rect x="1131.00" y="104.05" width="3.0" height="3.4" rx="1" fill="#7b7b7b" transform="rotate(180 1132.5 112.45)"/>
<rect x="1131.00" y="104.05" width="3.0" height="3.4" rx="1" fill="#7b7b7b" transform="rotate(225 1132.5 112.45)"/>
<rect x="1131.00" y="104.05" width="3.0" height="3.4" rx="1" fill="#7b7b7b" transform="rotate(270 1132.5 112.45)"/>
<rect x="1131.00" y="104.05" width="3.0" height="3.4" rx="1" fill="#7b7b7b" transform="rotate(315 1132.5 112.45)"/>
<circle cx="1132.5" cy="112.45" r="6.1" fill="#fff" stroke="#7b7b7b" stroke-width="1.5"/>
<circle cx="1132.5" cy="112.45" r="3.9" fill="none" stroke="#ee6b22" stroke-width="1.15" stroke-dasharray="2.6 0.46"/>
<text x="709.3" y="151.3" font-family="Liberation Sans" font-size="13.6" fill="#000" stroke="#000" stroke-width="0.1" textLength="52" lengthAdjust="spacing">Support:</text>
<rect x="765.5" y="133.5" width="354" height="26" fill="#fff" stroke="#7a7a7a" stroke-width="1"/>
<text x="770.5" y="152.4" font-family="Liberation Sans" font-size="13.6" fill="#000" stroke="#000" stroke-width="0.1" textLength="31" lengthAdjust="spacing">Geen</text>
<polyline points="1101.4,143.4 1108.2,149.0 1115.0,143.4" fill="none" stroke="#555" stroke-width="1.7"/>
<text x="709.3" y="181.3" font-family="Liberation Sans" font-size="13.6" fill="#000" stroke="#000" stroke-width="0.1" textLength="44.7" lengthAdjust="spacing">Vulling:</text>
<rect x="758.5" y="163.5" width="87" height="26" fill="#fff" stroke="#7a7a7a" stroke-width="1"/>
<text x="768" y="182.2" font-family="Liberation Sans" font-size="13.6" fill="#000" stroke="#000" stroke-width="0.1" textLength="25.8" lengthAdjust="spacing">15%</text>
<polyline points="827.8,174.2 834.5999999999999,179.79999999999998 841.4,174.2" fill="none" stroke="#555" stroke-width="1.7"/>
<text x="868.7" y="181.3" font-family="Liberation Sans" font-size="13.6" fill="#000" stroke="#000" stroke-width="0.1" textLength="30.3" lengthAdjust="spacing">Brim:</text>
<rect x="904.5" y="168.5" width="16" height="16" fill="#fff" stroke="#333" stroke-width="1"/>
<rect x="708.5" y="196.5" width="436" height="197" fill="#fff" stroke="#6e6e6e" stroke-width="1"/>
<line x1="928.4" y1="197.5" x2="928.4" y2="220.8" stroke="#e5e5e5"/><line x1="961.5" y1="197.5" x2="961.5" y2="220.8" stroke="#e5e5e5"/>
<text x="715.6" y="214.4" font-family="Liberation Sans" font-size="13.6" fill="#000" stroke="#000" stroke-width="0.1" textLength="34.6" lengthAdjust="spacing">Naam</text>
<text x="1023.4" y="214.7" font-family="Liberation Sans" font-size="13.6" fill="#000" stroke="#000" stroke-width="0.1" textLength="58" lengthAdjust="spacing">Bewerken</text>
<rect x="710" y="221.3" width="433" height="25.2" fill="#d9d9d9"/>
<text x="728.6" y="238.9" font-family="Liberation Sans" font-size="13.6" fill="#f7f7f7" stroke="#f7f7f7" stroke-width="0.1" textLength="192.5" lengthAdjust="spacing">05-76mm-12mm …n rooster.stl</text>
<path d="M937.8 233.7 C940.5 227.8 951.3 227.8 954 233.7 C951.3 239.6 940.5 239.6 937.8 233.7Z" fill="none" stroke="#808080" stroke-width="2.1"/><circle cx="945.9" cy="233.7" r="2.5" fill="#808080"/>
<path d="M1051.5 229.9 H1046.9 a1.9 1.9 0 0 0 -1.9 1.9 V239.2 a1.9 1.9 0 0 0 1.9 1.9 H1054.4 a1.9 1.9 0 0 0 1.9 -1.9 V234.8" fill="none" stroke="#808080" stroke-width="1.7"/>
<circle cx="1055.6" cy="230.6" r="3.3" fill="none" stroke="#ee6b22" stroke-width="1.3" stroke-dasharray="1.3 1.3"/><circle cx="1055.6" cy="230.6" r="2.3" fill="#d9d9d9" stroke="#ee6b22" stroke-width="1.5"/>
<rect x="708.5" y="408.5" width="436" height="201" fill="none" stroke="#dcdcdc" stroke-width="1"/>
<rect x="715" y="400" width="126" height="14" fill="#fff"/>
<text x="721.5" y="413.8" font-family="Liberation Sans" font-size="13.6" fill="#000" stroke="#000" stroke-width="0.1" font-weight="bold" textLength="113.4" lengthAdjust="spacing">Object bewerken</text>
<rect x="718.5" y="424.5" width="164" height="26" fill="#fff" stroke="#7a7a7a" stroke-width="1"/>
<text x="723.2" y="443.4" font-family="Liberation Sans" font-size="13.6" fill="#000" stroke="#000" stroke-width="0.1" textLength="116.4" lengthAdjust="spacing">Wereldcoördinaten</text>
<polyline points="864.2,434.6 871.0,440.20000000000005 877.8000000000001,434.6" fill="none" stroke="#555" stroke-width="1.7"/>
<text x="901.6" y="441.8" font-family="Liberation Sans" font-size="13.6" fill="#000" stroke="#000" stroke-width="0.1" font-weight="bold" textLength="8.5" lengthAdjust="spacing">X</text>
<path d="M921.2 431.5 H919.0 a2.5 2.5 0 0 0 -2.5 2.5 V440.5 a2.5 2.5 0 0 0 2.5 2.5 H921.2 M925.3000000000001 431.5 H928.1 a2.5 2.5 0 0 1 2.5 2.5 V440.5 a2.5 2.5 0 0 1 -2.5 2.5 H925.3000000000001" fill="none" stroke="#000" stroke-width="2.6"/>
<path d="M923.4000000000001 429 V431.4 M923.4000000000001 435 V439 M923.4000000000001 443 V445.8" stroke="#000" stroke-width="1.1"/>
<text x="967.6" y="441.8" font-family="Liberation Sans" font-size="13.6" fill="#000" stroke="#000" stroke-width="0.1" font-weight="bold" textLength="8.5" lengthAdjust="spacing">Y</text>
<path d="M987.2 431.5 H985.0 a2.5 2.5 0 0 0 -2.5 2.5 V440.5 a2.5 2.5 0 0 0 2.5 2.5 H987.2 M991.3000000000001 431.5 H994.1 a2.5 2.5 0 0 1 2.5 2.5 V440.5 a2.5 2.5 0 0 1 -2.5 2.5 H991.3000000000001" fill="none" stroke="#000" stroke-width="2.6"/>
<path d="M989.4000000000001 429 V431.4 M989.4000000000001 435 V439 M989.4000000000001 443 V445.8" stroke="#000" stroke-width="1.1"/>
<text x="1033.0" y="441.8" font-family="Liberation Sans" font-size="13.6" fill="#000" stroke="#000" stroke-width="0.1" font-weight="bold" textLength="8.5" lengthAdjust="spacing">Z</text>
<path d="M1052.6 431.5 H1050.3999999999999 a2.5 2.5 0 0 0 -2.5 2.5 V440.5 a2.5 2.5 0 0 0 2.5 2.5 H1052.6 M1056.6999999999998 431.5 H1059.5 a2.5 2.5 0 0 1 2.5 2.5 V440.5 a2.5 2.5 0 0 1 -2.5 2.5 H1056.6999999999998" fill="none" stroke="#000" stroke-width="2.6"/>
<path d="M1054.8 429 V431.4 M1054.8 435 V439 M1054.8 443 V445.8" stroke="#000" stroke-width="1.1"/>
<rect x="886.5" y="454.5" width="62" height="26" fill="#f5dcdc" stroke="#737373" stroke-width="1"/>
<text x="895.5" y="472.9" font-family="Liberation Sans" font-size="13.6" fill="#000" stroke="#000" stroke-width="0.1" textLength="34" lengthAdjust="spacing">94,33</text>
<rect x="952.5" y="454.5" width="62" height="26" fill="#ddf5dc" stroke="#737373" stroke-width="1"/>
<text x="961.5" y="472.9" font-family="Liberation Sans" font-size="13.6" fill="#000" stroke="#000" stroke-width="0.1" textLength="33" lengthAdjust="spacing">70,95</text>
<rect x="1018.5" y="454.5" width="62" height="26" fill="#dcdcf5" stroke="#737373" stroke-width="1"/>
<text x="1027.4" y="472.9" font-family="Liberation Sans" font-size="13.6" fill="#000" stroke="#000" stroke-width="0.1" textLength="6.8" lengthAdjust="spacing">8</text>
<text x="1084.1" y="472.9" font-family="Liberation Sans" font-size="13.6" fill="#000" stroke="#000" stroke-width="0.1" textLength="23.5" lengthAdjust="spacing">mm</text>
<rect x="886.5" y="484.5" width="62" height="26" fill="#f5dcdc" stroke="#737373" stroke-width="1"/>
<text x="895.5" y="502.8" font-family="Liberation Sans" font-size="13.6" fill="#000" stroke="#000" stroke-width="0.1" textLength="7.2" lengthAdjust="spacing">0</text>
<rect x="952.5" y="484.5" width="62" height="26" fill="#ddf5dc" stroke="#737373" stroke-width="1"/>
<text x="961.5" y="502.8" font-family="Liberation Sans" font-size="13.6" fill="#000" stroke="#000" stroke-width="0.1" textLength="7.2" lengthAdjust="spacing">0</text>
<rect x="1018.5" y="484.5" width="62" height="26" fill="#dcdcf5" stroke="#737373" stroke-width="1"/>
<text x="1027.4" y="502.8" font-family="Liberation Sans" font-size="13.6" fill="#000" stroke="#000" stroke-width="0.1" textLength="7.2" lengthAdjust="spacing">0</text>
<text x="1084.1" y="502.8" font-family="Liberation Sans" font-size="13.6" fill="#000" stroke="#000" stroke-width="0.1">°</text>
<rect x="886.5" y="514.5" width="62" height="26" fill="#f5dcdc" stroke="#737373" stroke-width="1"/>
<text x="895.5" y="532.9" font-family="Liberation Sans" font-size="13.6" fill="#000" stroke="#000" stroke-width="0.1" textLength="23" lengthAdjust="spacing">100</text>
<rect x="952.5" y="514.5" width="62" height="26" fill="#ddf5dc" stroke="#737373" stroke-width="1"/>
<text x="961.5" y="532.9" font-family="Liberation Sans" font-size="13.6" fill="#000" stroke="#000" stroke-width="0.1" textLength="23" lengthAdjust="spacing">100</text>
<rect x="1018.5" y="514.5" width="62" height="26" fill="#dcdcf5" stroke="#737373" stroke-width="1"/>
<text x="1027.4" y="532.9" font-family="Liberation Sans" font-size="13.6" fill="#000" stroke="#000" stroke-width="0.1" textLength="23" lengthAdjust="spacing">100</text>
<text x="1084.1" y="532.9" font-family="Liberation Sans" font-size="13.6" fill="#000" stroke="#000" stroke-width="0.1">%</text>
<rect x="886.5" y="544.5" width="62" height="26" fill="#f5dcdc" stroke="#737373" stroke-width="1"/>
<text x="895.5" y="562.8" font-family="Liberation Sans" font-size="13.6" fill="#000" stroke="#000" stroke-width="0.1" textLength="34" lengthAdjust="spacing">88,98</text>
<rect x="952.5" y="544.5" width="62" height="26" fill="#ddf5dc" stroke="#737373" stroke-width="1"/>
<text x="961.5" y="562.8" font-family="Liberation Sans" font-size="13.6" fill="#000" stroke="#000" stroke-width="0.1" textLength="34" lengthAdjust="spacing">88,99</text>
<rect x="1018.5" y="544.5" width="62" height="26" fill="#dcdcf5" stroke="#737373" stroke-width="1"/>
<text x="1027.4" y="562.8" font-family="Liberation Sans" font-size="13.6" fill="#000" stroke="#000" stroke-width="0.1" textLength="16.1" lengthAdjust="spacing">16</text>
<text x="1084.1" y="562.8" font-family="Liberation Sans" font-size="13.6" fill="#000" stroke="#000" stroke-width="0.1" textLength="23.5" lengthAdjust="spacing">mm</text>
<text x="718.9" y="471.9" font-family="Liberation Sans" font-size="13.6" fill="#000" stroke="#000" stroke-width="0.1" textLength="40.6" lengthAdjust="spacing">Positie:</text>
<text x="718.7" y="501.9" font-family="Liberation Sans" font-size="13.6" fill="#000" stroke="#000" stroke-width="0.1" textLength="99.7" lengthAdjust="spacing">Rotate (relative):</text>
<text x="741.8" y="531.8" font-family="Liberation Sans" font-size="13.6" fill="#000" stroke="#000" stroke-width="0.1" textLength="127.5" lengthAdjust="spacing">Verschalingsfactoren:</text>
<text x="741.8" y="561.7" font-family="Liberation Sans" font-size="13.6" fill="#000" stroke="#000" stroke-width="0.1" textLength="72.6" lengthAdjust="spacing">Size [World]:</text>
<path d="M722.95 543.2 V538.8000000000001 a3.1 3.1 0 0 1 3.1 -3.5 h2.6 a3.1 3.1 0 0 1 3.1 3.5 V543.2" fill="none" stroke="#808080" stroke-width="2.2"/>
<rect x="720.2" y="542.8000000000001" width="14.3" height="7.9" rx="1.6" fill="#808080"/>
<circle cx="726.6" cy="546.6" r="1.6" fill="#fff"/><rect x="726.6" y="545.95" width="3.2" height="1.3" fill="#fff"/>
<rect x="722.5" y="579.5" width="17" height="16" fill="#fff" stroke="#333" stroke-width="1"/>
<text x="745.8" y="593.4" font-family="Liberation Sans" font-size="13.6" fill="#000" stroke="#000" stroke-width="0.1" textLength="37.9" lengthAdjust="spacing">Inches</text>
<rect x="708.5" y="625.5" width="436" height="85" fill="none" stroke="#dcdcdc" stroke-width="1"/>
<rect x="715" y="615" width="30" height="14" fill="#fff"/>
<text x="717.5" y="631.3" font-family="Liberation Sans" font-size="13.6" fill="#000" stroke="#000" stroke-width="0.1" font-weight="bold" textLength="24.8" lengthAdjust="spacing">Info</text>
<text x="714.4" y="652.2" font-family="Liberation Sans" font-size="13.6" fill="#000" stroke="#000" stroke-width="0.1" textLength="50.6" lengthAdjust="spacing">Grootte:</text>
<text x="780.4" y="652.2" font-family="Liberation Sans" font-size="13.6" fill="#000" stroke="#000" stroke-width="0.1" textLength="132" lengthAdjust="spacing">88,98 x 88,99 x 16,00</text>
<text x="929" y="652.2" font-family="Liberation Sans" font-size="13.6" fill="#000" stroke="#000" stroke-width="0.1" textLength="47.6" lengthAdjust="spacing">Volume:</text>
<text x="994.1" y="652.2" font-family="Liberation Sans" font-size="13.6" fill="#000" stroke="#000" stroke-width="0.1" textLength="56.4" lengthAdjust="spacing">11368,71</text>
<text x="714.4" y="677.0" font-family="Liberation Sans" font-size="13.6" fill="#000" stroke="#000" stroke-width="0.1" textLength="50.6" lengthAdjust="spacing">Vlakken:</text>
<text x="780.4" y="677.0" font-family="Liberation Sans" font-size="13.6" fill="#000" stroke="#000" stroke-width="0.1" textLength="82.5" lengthAdjust="spacing">2380 (1 shell)</text>
<text x="716.5" y="700.9" font-family="Liberation Sans" font-size="13.6" fill="#000" stroke="#000" stroke-width="0.1" textLength="140.2" lengthAdjust="spacing">Geen fouten gevonden</text>
<path d="M708.5 900 V726.5 H1144.5 V900" fill="none" stroke="#dcdcdc"/>
<rect x="715" y="716" width="67" height="14" fill="#fff"/>
<text x="717.5" y="731.8" font-family="Liberation Sans" font-size="13.6" fill="#000" stroke="#000" stroke-width="0.1" font-weight="bold" textLength="62" lengthAdjust="spacing">Slice-info</text>
<text x="714.5" y="753.1" font-family="Liberation Sans" font-size="13.6" fill="#000" stroke="#000" stroke-width="0.1" textLength="121" lengthAdjust="spacing">Filamentverbruik (g)</text>
<text x="872.6" y="753.1" font-family="Liberation Sans" font-size="13.6" fill="#000" stroke="#000" stroke-width="0.1" textLength="33.6" lengthAdjust="spacing">13,92</text>
<text x="714.5" y="777.4" font-family="Liberation Sans" font-size="13.6" fill="#000" stroke="#000" stroke-width="0.1" textLength="125.4" lengthAdjust="spacing">Filamentverbruik (m)</text>
<text x="872.6" y="777.4" font-family="Liberation Sans" font-size="13.6" fill="#000" stroke="#000" stroke-width="0.1" textLength="25.3" lengthAdjust="spacing">4,67</text>
<text x="714.5" y="802.0" font-family="Liberation Sans" font-size="13.6" fill="#000" stroke="#000" stroke-width="0.1" textLength="141.7" lengthAdjust="spacing">Filamentverbruik (mm³)</text>
<text x="872.6" y="802.0" font-family="Liberation Sans" font-size="13.6" fill="#000" stroke="#000" stroke-width="0.1" textLength="57.8" lengthAdjust="spacing">11228,10</text>
<text x="714.5" y="826.4" font-family="Liberation Sans" font-size="13.6" fill="#000" stroke="#000" stroke-width="0.1" textLength="40.7" lengthAdjust="spacing">Kosten</text>
<text x="872.6" y="826.4" font-family="Liberation Sans" font-size="13.6" fill="#000" stroke="#000" stroke-width="0.1" textLength="25.8" lengthAdjust="spacing">0,35</text>
<text x="714.5" y="851.7" font-family="Liberation Sans" font-size="13.6" fill="#000" stroke="#000" stroke-width="0.1" textLength="115" lengthAdjust="spacing">Geschatte printtijd:</text>
<text x="726.7" y="871.3" font-family="Liberation Sans" font-size="13.6" fill="#000" stroke="#000" stroke-width="0.1" textLength="104.8" lengthAdjust="spacing">- normale modus</text>
<text x="872.6" y="871.3" font-family="Liberation Sans" font-size="13.6" fill="#000" stroke="#000" stroke-width="0.1" textLength="27" lengthAdjust="spacing">51m</text>
<text x="726.7" y="890.5" font-family="Liberation Sans" font-size="13.6" fill="#000" stroke="#000" stroke-width="0.1" textLength="81.7" lengthAdjust="spacing">- stille modus</text>
<text x="872.6" y="890.5" font-family="Liberation Sans" font-size="13.6" fill="#000" stroke="#000" stroke-width="0.1" textLength="27" lengthAdjust="spacing">52m</text>
<rect x="708" y="889" width="456" height="37" fill="#fff"/>
<rect x="708" y="893.9" width="456" height="32.1" fill="#e1e1e1"/>
<text x="849.5" y="917.5" font-family="Liberation Sans" font-size="13.6" fill="#000" stroke="#000" stroke-width="0.1" font-weight="bold" textLength="173.5" lengthAdjust="spacing">Exporteer .gcode-bestand</text></g>
</svg>
</body></html>
